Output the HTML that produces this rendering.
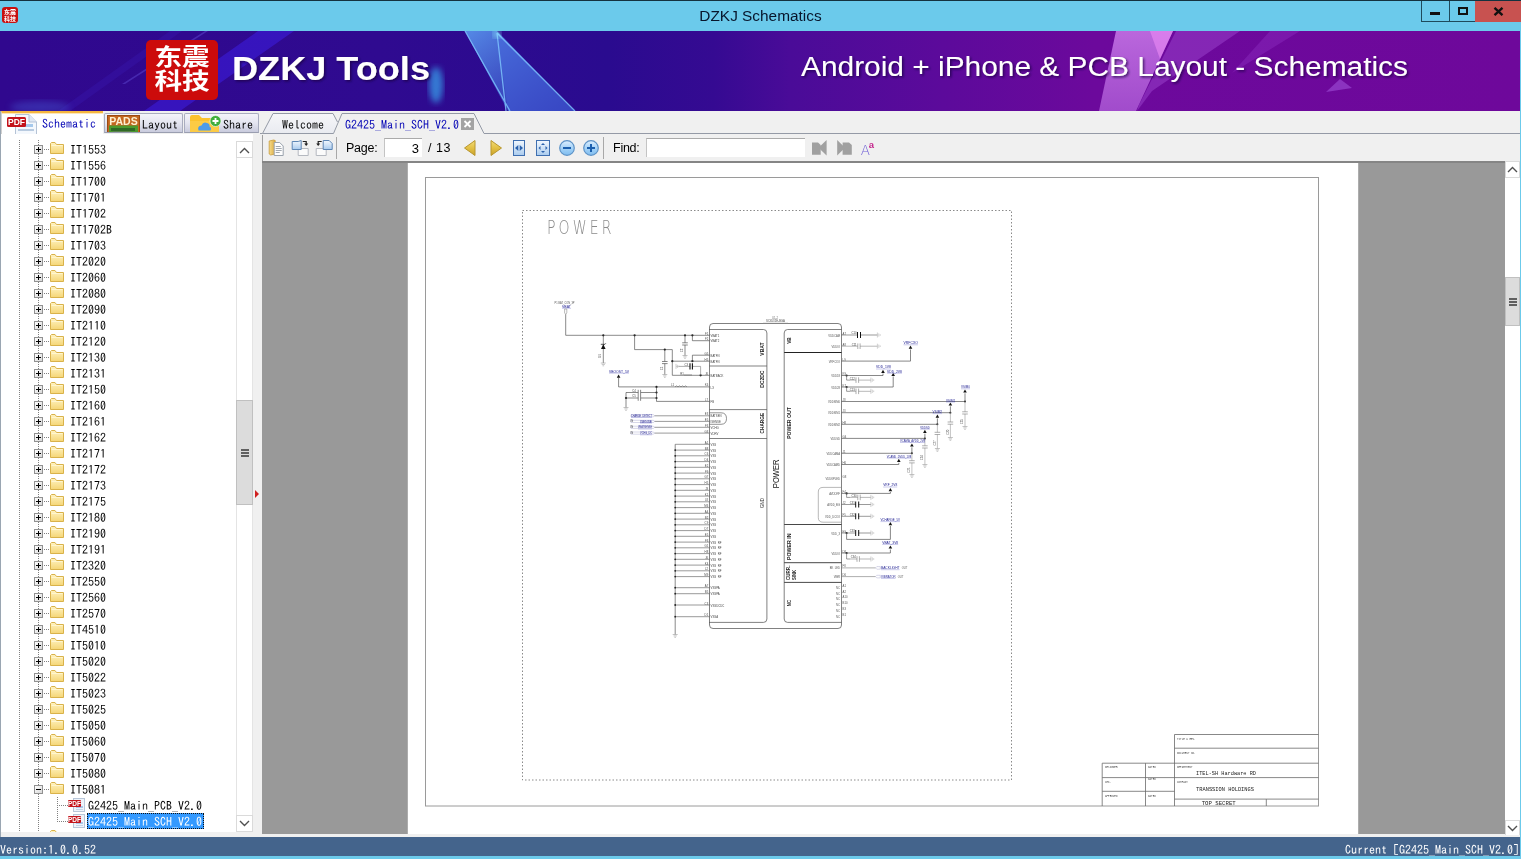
<!DOCTYPE html>
<html><head><meta charset="utf-8"><title>DZKJ Schematics</title>
<style>
html,body{margin:0;padding:0;}
body{width:1521px;height:859px;overflow:hidden;background:#6bcaeb;font-family:"Liberation Sans",sans-serif;}
#win{position:absolute;left:0;top:0;width:1521px;height:859px;background:#6bcaeb;overflow:hidden;will-change:transform;}
#mid{position:absolute;left:0;top:111px;width:1520px;height:726px;background:#f0f0f0;}
#win:before{content:"";position:absolute;left:0;top:0;width:1521px;height:1px;background:#14323f;z-index:9;}
.mono{font-family:"Liberation Mono","Noto Sans CJK SC",monospace;}
#titlebar{position:absolute;left:0;top:0;width:1521px;height:31px;}
#title{position:absolute;left:0;width:1521px;top:6.5px;text-align:center;font-size:15.4px;color:#08162c;line-height:18px;}
#appicon{position:absolute;left:2px;top:7px;width:16px;height:16px;background:#c8100f;border-radius:3px;overflow:hidden;font-family:"Liberation Sans","Noto Sans CJK SC",sans-serif;color:#fff;font-size:6px;line-height:6px;font-weight:bold;text-align:center;}
#appicon span{display:block;letter-spacing:0;margin-top:1.5px;}
#wbtns{position:absolute;left:1421px;top:1px;height:21px;width:100px;}
.wb{position:absolute;top:0;height:21px;box-sizing:border-box;border:1px solid #1e4a5c;border-top:none;}
.wb.min{left:0;width:29px;}
.wb.min i{position:absolute;left:8px;top:11px;width:10px;height:3px;background:#111;}
.wb.max{left:28px;width:27px;border-right:none}
.wb.max i{position:absolute;left:8px;top:6px;width:6px;height:4px;border:2px solid #111;border-top-width:2.5px;}
.wb.cls{left:54px;width:46px;background:#c85250;border:none;}
.wb.cls svg{position:absolute;left:18px;top:6px;}
#banner{position:absolute;left:0;top:31px;width:1520px;height:80px;overflow:hidden;background:#2f088d;}
#logo{position:absolute;left:146px;top:9px;width:72px;height:60px;background:#cc0b0b;border-radius:5px;font-family:"Liberation Sans","Noto Sans CJK SC",sans-serif;font-weight:bold;color:#fff;font-size:23px;overflow:hidden;}
#logo span{position:absolute;left:0;width:60px;text-align:center;line-height:24px;white-space:nowrap;transform:scaleX(1.2);transform-origin:0 0;letter-spacing:0;}
#logo span:first-child{top:5px;}
#logo span:last-child{top:29px;}
#tabrow{position:absolute;left:0;top:111px;width:1520px;height:24px;background:#f0f0f0;}
#left{position:absolute;left:0;top:134px;width:253px;height:698px;background:#fff;overflow:hidden;}
#tree{position:absolute;left:0;top:-134px;width:236px;height:966px;max-height:966px;clip-path:inset(135px 0 0 0);overflow:hidden;}
#lsb{position:absolute;left:236px;top:7px;width:17px;height:691px;background:#fff;box-sizing:border-box;border-left:1px solid #e4e4e4;border-right:1px solid #e4e4e4;}
#lsb .sbtn,#lsb .thumb{left:-1px;width:17px;}
#lsb .sbtn.up svg{margin-top:-2.5px;}
#edge{position:absolute;left:0;top:111px;width:1px;height:726px;background:#9aa6b2;}
#split{position:absolute;left:253px;top:135px;width:9px;height:699px;background:#f0f0f0;}
#toolbar{position:absolute;left:262px;top:135px;width:1258px;height:26px;background:#f0f0f0;}
#doc{position:absolute;left:262px;top:161px;width:1243px;height:673px;background:#999;}
#page{position:absolute;left:146px;top:2px;width:949px;height:671px;background:#fff;}
#status{position:absolute;left:0;top:836.5px;width:1520px;height:19px;background:#44648c;color:#fff;}
.vline{position:absolute;width:1px;background-image:linear-gradient(#808080 50%,transparent 50%);background-size:1px 2px;}
.hline{position:absolute;height:1px;background-image:linear-gradient(90deg,#808080 50%,transparent 50%);background-size:2px 1px;}
.row{position:absolute;left:0;width:236px;height:16px;font-family:"IPAGothic","Liberation Mono",monospace;font-size:12px;line-height:16px;color:#000;white-space:nowrap;}
.row .box{position:absolute;left:34px;top:4px;width:7px;height:7px;border:1px solid #919191;background:linear-gradient(135deg,#fff,#d8d8d8);}
.row .box:before{content:"";position:absolute;left:1px;top:3px;width:5px;height:1px;background:#000;}
.row .box.plus:after{content:"";position:absolute;left:3px;top:1px;width:1px;height:5px;background:#000;}
.row .box + .fld{left:49px;}
.row.nc:after{display:none}
.row:after{content:"";position:absolute;left:44px;top:8px;width:5px;height:1px;background-image:linear-gradient(90deg,#808080 50%,transparent 50%);background-size:2px 1px;}
.row .fld{position:absolute;left:49px;top:0px;}
.row .lbl{position:absolute;left:69px;top:-0.5px;padding:0 1px;}
.row .lbl.c{left:87px;}
.row .lbl.sel{background:#3399ff;color:#fff;outline:1px dotted #111;outline-offset:-1px;height:16px;padding-right:2px;}
.row .pdfw{position:absolute;left:68px;top:0px;}
.ltab{position:absolute;top:2px;height:20px;box-sizing:border-box;border:1px solid #a9adbf;border-bottom:1px solid #9a9eb0;border-radius:2px 2px 0 0;background:linear-gradient(#f4f4fa,#e4e5f0 50%,#c9cbdd);overflow:hidden;}
.ltab.act{top:0;height:24px;background:#fff;border:none;border-top:2px solid #f5b640;box-shadow:inset 0 1px 0 #fde6b8;border-radius:0;border-left:1px solid #d0d0d0;}
.ltab .ti{position:absolute;}
.tt{position:absolute;top:1.5px;font-family:"IPAGothic","Liberation Mono",monospace;font-size:12px;line-height:16px;white-space:nowrap;color:#000;}

#toolbar{border-left:1px solid #a0a0a0;box-sizing:border-box;}
#toolbar .tl{position:absolute;top:5px;letter-spacing:-0.25px;font-size:12.5px;line-height:16px;color:#000;white-space:nowrap;}
#toolbar .inp{position:absolute;top:3px;height:19px;background:#fff;border-top:1px solid #aaa;border-left:1px solid #c4c4c4;box-sizing:border-box;font-size:13px;line-height:18px;}
#toolbar .inp span{position:absolute;right:3px;top:1px;}
#doc{border-top:2px solid #858585;box-sizing:border-box;top:161px;height:673px;overflow:hidden;}
#sch{top:-2px !important;}
#rsb{position:absolute;left:1505px;top:161px;width:15px;height:674px;background:#fff;overflow:hidden;}
#rsb .sbtn.dn{bottom:-2px;}
.sbtn{position:absolute;left:0;width:100%;height:17px;box-sizing:border-box;background:#fff;border:1px solid #dadada;}
.sbtn svg{position:absolute;left:50%;top:50%;margin:-3.5px 0 0 -5.5px;}
.sbtn.up{top:0;} .sbtn.dn{bottom:0;}
.thumb{position:absolute;left:0;width:100%;background:#dcdcdc;border:1px solid #c0c0c0;box-sizing:border-box;}
.thumb b{position:absolute;left:50%;top:50%;width:8px;height:8px;margin:-4px 0 0 -4px;background:linear-gradient(#606060 0,#606060 2px,transparent 2px,transparent 3px,#606060 3px,#606060 5px,transparent 5px,transparent 6px,#606060 6px);}
#status{font-family:"IPAGothic","Liberation Mono",monospace;font-size:12px;line-height:19px;}
#status .l{position:absolute;left:0;top:3px;white-space:nowrap;}
#status .r{position:absolute;right:1px;top:3px;white-space:nowrap;}
#split i{position:absolute;left:2px;top:355px;width:0;height:0;border-left:4px solid #d02020;border-top:4px solid transparent;border-bottom:4px solid transparent;}

</style></head>
<body>
<svg width="0" height="0" style="position:absolute"><defs>
<linearGradient id="fg" x1="0" y1="0" x2="0" y2="1"><stop offset="0" stop-color="#fff3c2"/><stop offset="1" stop-color="#f5d676"/></linearGradient>
</defs></svg>
<div id="win">
<div id="titlebar"><div id="appicon"><span>东震</span><span>科技</span></div><div id="title">DZKJ Schematics</div>
<div id="wbtns"><div class="wb min"><i></i></div><div class="wb max"><i></i></div><div class="wb cls"><svg width="11" height="9" viewBox="0 0 11 9"><path d="M1.500 0.800 L9.500 8.200 M9.500 0.800 L1.500 8.200" stroke="#111" stroke-width="2.300"/></svg></div></div>
</div>
<div id="banner">
<svg width="1520" height="80" viewBox="0 0 1520 80" style="position:absolute;left:0;top:0">
<defs>
<linearGradient id="bg1" x1="0" y1="0" x2="1520" y2="0" gradientUnits="userSpaceOnUse">
<stop offset="0" stop-color="#30088e"/><stop offset="0.25" stop-color="#2f0a90"/><stop offset="0.4" stop-color="#2a0b8f"/><stop offset="0.47" stop-color="#350a92"/><stop offset="0.52" stop-color="#4a0b98"/><stop offset="0.62" stop-color="#5c0a9b"/><stop offset="0.72" stop-color="#6c099c"/><stop offset="1" stop-color="#6e089b"/>
</linearGradient>
<linearGradient id="tri" x1="0" y1="0" x2="1" y2="1"><stop offset="0" stop-color="#5a98f0" stop-opacity=".9"/><stop offset="1" stop-color="#2d3cc0" stop-opacity=".55"/></linearGradient>
<linearGradient id="pk" x1="0" y1="0" x2="0" y2="1"><stop offset="0" stop-color="#c878e8" stop-opacity=".85"/><stop offset="1" stop-color="#b868e0" stop-opacity=".7"/></linearGradient>
<filter id="ts" x="-5%" y="-20%" width="110%" height="150%"><feDropShadow dx="1.500" dy="1.500" stdDeviation="1" flood-color="#1a0040" flood-opacity=".75"/></filter>
<filter id="bl"><feGaussianBlur stdDeviation="3"/></filter>
</defs>
<rect width="1520" height="80" fill="url(#bg1)"/>
<!-- left streaks -->
<path d="M258 0 L294 0 L180 80 L144 80 Z" fill="#3c1cdc" opacity=".6"/>
<path d="M205 0 L208 0 L125 53 L122 53 Z" fill="#6a58e0" opacity=".4"/>
<path d="M170 0 L182 0 L70 80 L58 80 Z" fill="#3a20c0" opacity=".25"/>
<ellipse cx="436" cy="54" rx="7" ry="18" fill="#38a8f0" opacity=".7" filter="url(#bl)"/>
<ellipse cx="40" cy="76" rx="30" ry="6" fill="#4a6ae0" opacity=".35" filter="url(#bl)"/>
<!-- blue triangle -->
<path d="M465 0 L497 0 L575 80 L508 80 Z" fill="url(#tri)"/>
<path d="M497 2 L508 80 L575 80 Z" fill="#4466dc" opacity=".5"/>
<path d="M465 0 L510 80 M497 2 L506 80 M497 2 L575 80" stroke="#7fc8ff" stroke-width="1.300" opacity=".8" fill="none"/>
<circle cx="497" cy="3" r="4" fill="#9ff" opacity=".6" filter="url(#bl)"/>
<!-- pink shards -->
<path d="M1116 0 L1173 0 L1136 80 L1099 80 Z" fill="url(#pk)"/>
<path d="M1150 0 L1173 0 L1160 28 Z" fill="#f090f8" opacity=".55"/>
<path d="M1176 0 L1240 0 L1152 60 L1137 80 L1139 74 Z" fill="#a850d8" opacity=".42"/>
<path d="M1270 0 L1300 0 L1232 42 Z" fill="#9a40d0" opacity=".3"/>
<path d="M1326 61 L1340 48 L1352 57 Z" fill="#a050d8" opacity=".6"/>
<text x="232" y="48.500" font-family="Liberation Sans, sans-serif" font-weight="bold" font-size="32.500" fill="#fff" textLength="198" lengthAdjust="spacingAndGlyphs" filter="url(#ts)">DZKJ Tools</text>
<text x="801" y="44.500" font-family="Liberation Sans, sans-serif" font-size="26.800" fill="#fff" textLength="607" lengthAdjust="spacingAndGlyphs" filter="url(#ts)">Android + iPhone &amp; PCB Layout - Schematics</text>
</svg>
<div id="logo"><span>东震</span><span>科技</span></div>
</div>

<div id="mid"></div>
<div id="tabrow">
<div class="ltab act" style="left:1px;width:102px"><svg class="ti" width="36" height="22" viewBox="0 0 36 22" style="left:2px;top:0px"><path d="M11.5 1.500 L25 1.500 L32.500 9 L32.500 22 L11.500 22 Z" fill="#f4f8fd" stroke="#b5c3d6"/><path d="M25 1.500 L25 9 L32.500 9" fill="#dfe8f3" stroke="#b5c3d6"/><rect x="15" y="11" width="14" height="3" fill="#a6c9ec"/><rect x="14" y="16" width="16" height="2" fill="#b9cbe0"/><rect x="3" y="4" width="19" height="10" rx="1.500" fill="#c3131b"/><text x="12.500" y="12" font-family="Liberation Sans" font-weight="bold" font-size="8.500" fill="#fff" text-anchor="middle">PDF</text></svg><span class="tt" style="left:40px;top:2px;color:#0000b4">Schematic</span></div>
<div class="ltab" style="left:104px;width:79px"><svg class="ti" width="34" height="19" viewBox="0 0 34 19" style="left:2px;top:1px"><rect x="0.500" y="0.500" width="32" height="19" fill="#c4661f" stroke="#9a4a12"/><rect x="2" y="10.500" width="29" height="9" fill="#4c9a2e"/><rect x="4" y="13" width="24" height="3" fill="#2f6a25"/><rect x="6" y="16.500" width="18" height="2" fill="#6b6b6b"/><text x="16.500" y="9.500" font-family="Liberation Sans" font-weight="bold" font-size="10.500" fill="#fdf0d0" text-anchor="middle">PADS</text></svg><span class="tt" style="left:37px">Layout</span></div>
<div class="ltab" style="left:184px;width:75px"><svg class="ti" width="34" height="20" viewBox="0 0 34 20" style="left:4px;top:-1px"><path d="M1 4 Q1 2 3 2 L10 2 L13 5 L28 5 Q30 5 30 7 L30 20 L1 20 Z" fill="#fbc22f"/><path d="M1 8 L30 8 L30 20 L1 20 Z" fill="#fccb45"/><path d="M9.500 17.500 Q8 13 12.500 12.500 Q14 8.500 18 10 Q21 10.500 20.500 13.500 Q23 14.500 21.500 17.500 Z" fill="#4c9be8"/><circle cx="26.500" cy="8" r="5.500" fill="#3fae3c" stroke="#fff" stroke-width="0.600"/><path d="M23.500 8 L29.500 8 M26.500 5 L26.500 11" stroke="#fff" stroke-width="1.800"/></svg><span class="tt" style="left:38px">Share</span></div>
<svg id="dtabs" width="1260" height="24" viewBox="0 0 1260 24" style="position:absolute;left:260px;top:0">
<defs><linearGradient id="wtg" x1="0" y1="0" x2="0" y2="1"><stop offset="0" stop-color="#f6f6f9"/><stop offset="1" stop-color="#e9ebf0"/></linearGradient></defs><path d="M2.500 22.500 L13 2.500 L73 2.500 L77.500 11 L73.500 22.500 Z" fill="url(#wtg)" stroke="none"/><path d="M0 22.500 L2.500 22.500 L13 2.500 L73 2.500 L77.500 11" fill="none" stroke="#949aa6" stroke-width="1"/>
<path d="M2.500 22.500 L73.500 22.500" stroke="#949aa6" stroke-width="1"/>
<path d="M73.500 22.500 L82 2.500 L214 2.500 L224 22.500 L1260 22.500" fill="none" stroke="#949aa6" stroke-width="1"/>
<rect x="201" y="7" width="13" height="12" fill="#a3a3a3"/>
<path d="M204.500 10 L210.500 16 M210.500 10 L204.500 16" stroke="#fff" stroke-width="1.800"/>
</svg>
<span class="tt" style="left:282px;top:4.5px">Welcome</span>
<span class="tt" style="left:345px;top:4.5px;color:#0000b4">G2425_Main_SCH_V2.0</span>
</div>

<div id="left">
<div id="tree">
<div class="vline" style="left:19px;top:140px;height:692px"></div>
<div class="vline" style="left:38px;top:140px;height:692px"></div>
<div class="vline" style="left:57px;top:797px;height:25px"></div>
<div class="hline" style="left:57px;top:805px;width:11px"></div>
<div class="hline" style="left:57px;top:821px;width:11px"></div>
<div class="row" style="top:141px"><span class="box plus"></span><svg class="fld" width="16" height="14" viewBox="0 0 16 14"><path d="M1.5 2.5 L1.5 12.5 L14.5 12.5 L14.5 3.5 L7.5 3.5 L6 1.5 L2.5 1.5 Z" fill="url(#fg)" stroke="#d9b24a" stroke-width="1"/><path d="M2.5 4.5 L13.5 4.5" stroke="#fff6cf" stroke-width="1"/></svg><span class="lbl">IT1553</span></div><div class="row" style="top:157px"><span class="box plus"></span><svg class="fld" width="16" height="14" viewBox="0 0 16 14"><path d="M1.5 2.5 L1.5 12.5 L14.5 12.5 L14.5 3.5 L7.5 3.5 L6 1.5 L2.5 1.5 Z" fill="url(#fg)" stroke="#d9b24a" stroke-width="1"/><path d="M2.5 4.5 L13.5 4.5" stroke="#fff6cf" stroke-width="1"/></svg><span class="lbl">IT1556</span></div><div class="row" style="top:173px"><span class="box plus"></span><svg class="fld" width="16" height="14" viewBox="0 0 16 14"><path d="M1.5 2.5 L1.5 12.5 L14.5 12.5 L14.5 3.5 L7.5 3.5 L6 1.5 L2.5 1.5 Z" fill="url(#fg)" stroke="#d9b24a" stroke-width="1"/><path d="M2.5 4.5 L13.5 4.5" stroke="#fff6cf" stroke-width="1"/></svg><span class="lbl">IT1700</span></div><div class="row" style="top:189px"><span class="box plus"></span><svg class="fld" width="16" height="14" viewBox="0 0 16 14"><path d="M1.5 2.5 L1.5 12.5 L14.5 12.5 L14.5 3.5 L7.5 3.5 L6 1.5 L2.5 1.5 Z" fill="url(#fg)" stroke="#d9b24a" stroke-width="1"/><path d="M2.5 4.5 L13.5 4.5" stroke="#fff6cf" stroke-width="1"/></svg><span class="lbl">IT1701</span></div><div class="row" style="top:205px"><span class="box plus"></span><svg class="fld" width="16" height="14" viewBox="0 0 16 14"><path d="M1.5 2.5 L1.5 12.5 L14.5 12.5 L14.5 3.5 L7.5 3.5 L6 1.5 L2.5 1.5 Z" fill="url(#fg)" stroke="#d9b24a" stroke-width="1"/><path d="M2.5 4.5 L13.5 4.5" stroke="#fff6cf" stroke-width="1"/></svg><span class="lbl">IT1702</span></div><div class="row" style="top:221px"><span class="box plus"></span><svg class="fld" width="16" height="14" viewBox="0 0 16 14"><path d="M1.5 2.5 L1.5 12.5 L14.5 12.5 L14.5 3.5 L7.5 3.5 L6 1.5 L2.5 1.5 Z" fill="url(#fg)" stroke="#d9b24a" stroke-width="1"/><path d="M2.5 4.5 L13.5 4.5" stroke="#fff6cf" stroke-width="1"/></svg><span class="lbl">IT1702B</span></div><div class="row" style="top:237px"><span class="box plus"></span><svg class="fld" width="16" height="14" viewBox="0 0 16 14"><path d="M1.5 2.5 L1.5 12.5 L14.5 12.5 L14.5 3.5 L7.5 3.5 L6 1.5 L2.5 1.5 Z" fill="url(#fg)" stroke="#d9b24a" stroke-width="1"/><path d="M2.5 4.5 L13.5 4.5" stroke="#fff6cf" stroke-width="1"/></svg><span class="lbl">IT1703</span></div><div class="row" style="top:253px"><span class="box plus"></span><svg class="fld" width="16" height="14" viewBox="0 0 16 14"><path d="M1.5 2.5 L1.5 12.5 L14.5 12.5 L14.5 3.5 L7.5 3.5 L6 1.5 L2.5 1.5 Z" fill="url(#fg)" stroke="#d9b24a" stroke-width="1"/><path d="M2.5 4.5 L13.5 4.5" stroke="#fff6cf" stroke-width="1"/></svg><span class="lbl">IT2020</span></div><div class="row" style="top:269px"><span class="box plus"></span><svg class="fld" width="16" height="14" viewBox="0 0 16 14"><path d="M1.5 2.5 L1.5 12.5 L14.5 12.5 L14.5 3.5 L7.5 3.5 L6 1.5 L2.5 1.5 Z" fill="url(#fg)" stroke="#d9b24a" stroke-width="1"/><path d="M2.5 4.5 L13.5 4.5" stroke="#fff6cf" stroke-width="1"/></svg><span class="lbl">IT2060</span></div><div class="row" style="top:285px"><span class="box plus"></span><svg class="fld" width="16" height="14" viewBox="0 0 16 14"><path d="M1.5 2.5 L1.5 12.5 L14.5 12.5 L14.5 3.5 L7.5 3.5 L6 1.5 L2.5 1.5 Z" fill="url(#fg)" stroke="#d9b24a" stroke-width="1"/><path d="M2.5 4.5 L13.5 4.5" stroke="#fff6cf" stroke-width="1"/></svg><span class="lbl">IT2080</span></div><div class="row" style="top:301px"><span class="box plus"></span><svg class="fld" width="16" height="14" viewBox="0 0 16 14"><path d="M1.5 2.5 L1.5 12.5 L14.5 12.5 L14.5 3.5 L7.5 3.5 L6 1.5 L2.5 1.5 Z" fill="url(#fg)" stroke="#d9b24a" stroke-width="1"/><path d="M2.5 4.5 L13.5 4.5" stroke="#fff6cf" stroke-width="1"/></svg><span class="lbl">IT2090</span></div><div class="row" style="top:317px"><span class="box plus"></span><svg class="fld" width="16" height="14" viewBox="0 0 16 14"><path d="M1.5 2.5 L1.5 12.5 L14.5 12.5 L14.5 3.5 L7.5 3.5 L6 1.5 L2.5 1.5 Z" fill="url(#fg)" stroke="#d9b24a" stroke-width="1"/><path d="M2.5 4.5 L13.5 4.5" stroke="#fff6cf" stroke-width="1"/></svg><span class="lbl">IT2110</span></div><div class="row" style="top:333px"><span class="box plus"></span><svg class="fld" width="16" height="14" viewBox="0 0 16 14"><path d="M1.5 2.5 L1.5 12.5 L14.5 12.5 L14.5 3.5 L7.5 3.5 L6 1.5 L2.5 1.5 Z" fill="url(#fg)" stroke="#d9b24a" stroke-width="1"/><path d="M2.5 4.5 L13.5 4.5" stroke="#fff6cf" stroke-width="1"/></svg><span class="lbl">IT2120</span></div><div class="row" style="top:349px"><span class="box plus"></span><svg class="fld" width="16" height="14" viewBox="0 0 16 14"><path d="M1.5 2.5 L1.5 12.5 L14.5 12.5 L14.5 3.5 L7.5 3.5 L6 1.5 L2.5 1.5 Z" fill="url(#fg)" stroke="#d9b24a" stroke-width="1"/><path d="M2.5 4.5 L13.5 4.5" stroke="#fff6cf" stroke-width="1"/></svg><span class="lbl">IT2130</span></div><div class="row" style="top:365px"><span class="box plus"></span><svg class="fld" width="16" height="14" viewBox="0 0 16 14"><path d="M1.5 2.5 L1.5 12.5 L14.5 12.5 L14.5 3.5 L7.5 3.5 L6 1.5 L2.5 1.5 Z" fill="url(#fg)" stroke="#d9b24a" stroke-width="1"/><path d="M2.5 4.5 L13.5 4.5" stroke="#fff6cf" stroke-width="1"/></svg><span class="lbl">IT2131</span></div><div class="row" style="top:381px"><span class="box plus"></span><svg class="fld" width="16" height="14" viewBox="0 0 16 14"><path d="M1.5 2.5 L1.5 12.5 L14.5 12.5 L14.5 3.5 L7.5 3.5 L6 1.5 L2.5 1.5 Z" fill="url(#fg)" stroke="#d9b24a" stroke-width="1"/><path d="M2.5 4.5 L13.5 4.5" stroke="#fff6cf" stroke-width="1"/></svg><span class="lbl">IT2150</span></div><div class="row" style="top:397px"><span class="box plus"></span><svg class="fld" width="16" height="14" viewBox="0 0 16 14"><path d="M1.5 2.5 L1.5 12.5 L14.5 12.5 L14.5 3.5 L7.5 3.5 L6 1.5 L2.5 1.5 Z" fill="url(#fg)" stroke="#d9b24a" stroke-width="1"/><path d="M2.5 4.5 L13.5 4.5" stroke="#fff6cf" stroke-width="1"/></svg><span class="lbl">IT2160</span></div><div class="row" style="top:413px"><span class="box plus"></span><svg class="fld" width="16" height="14" viewBox="0 0 16 14"><path d="M1.5 2.5 L1.5 12.5 L14.5 12.5 L14.5 3.5 L7.5 3.5 L6 1.5 L2.5 1.5 Z" fill="url(#fg)" stroke="#d9b24a" stroke-width="1"/><path d="M2.5 4.5 L13.5 4.5" stroke="#fff6cf" stroke-width="1"/></svg><span class="lbl">IT2161</span></div><div class="row" style="top:429px"><span class="box plus"></span><svg class="fld" width="16" height="14" viewBox="0 0 16 14"><path d="M1.5 2.5 L1.5 12.5 L14.5 12.5 L14.5 3.5 L7.5 3.5 L6 1.5 L2.5 1.5 Z" fill="url(#fg)" stroke="#d9b24a" stroke-width="1"/><path d="M2.5 4.5 L13.5 4.5" stroke="#fff6cf" stroke-width="1"/></svg><span class="lbl">IT2162</span></div><div class="row" style="top:445px"><span class="box plus"></span><svg class="fld" width="16" height="14" viewBox="0 0 16 14"><path d="M1.5 2.5 L1.5 12.5 L14.5 12.5 L14.5 3.5 L7.5 3.5 L6 1.5 L2.5 1.5 Z" fill="url(#fg)" stroke="#d9b24a" stroke-width="1"/><path d="M2.5 4.5 L13.5 4.5" stroke="#fff6cf" stroke-width="1"/></svg><span class="lbl">IT2171</span></div><div class="row" style="top:461px"><span class="box plus"></span><svg class="fld" width="16" height="14" viewBox="0 0 16 14"><path d="M1.5 2.5 L1.5 12.5 L14.5 12.5 L14.5 3.5 L7.5 3.5 L6 1.5 L2.5 1.5 Z" fill="url(#fg)" stroke="#d9b24a" stroke-width="1"/><path d="M2.5 4.5 L13.5 4.5" stroke="#fff6cf" stroke-width="1"/></svg><span class="lbl">IT2172</span></div><div class="row" style="top:477px"><span class="box plus"></span><svg class="fld" width="16" height="14" viewBox="0 0 16 14"><path d="M1.5 2.5 L1.5 12.5 L14.5 12.5 L14.5 3.5 L7.5 3.5 L6 1.5 L2.5 1.5 Z" fill="url(#fg)" stroke="#d9b24a" stroke-width="1"/><path d="M2.5 4.5 L13.5 4.5" stroke="#fff6cf" stroke-width="1"/></svg><span class="lbl">IT2173</span></div><div class="row" style="top:493px"><span class="box plus"></span><svg class="fld" width="16" height="14" viewBox="0 0 16 14"><path d="M1.5 2.5 L1.5 12.5 L14.5 12.5 L14.5 3.5 L7.5 3.5 L6 1.5 L2.5 1.5 Z" fill="url(#fg)" stroke="#d9b24a" stroke-width="1"/><path d="M2.5 4.5 L13.5 4.5" stroke="#fff6cf" stroke-width="1"/></svg><span class="lbl">IT2175</span></div><div class="row" style="top:509px"><span class="box plus"></span><svg class="fld" width="16" height="14" viewBox="0 0 16 14"><path d="M1.5 2.5 L1.5 12.5 L14.5 12.5 L14.5 3.5 L7.5 3.5 L6 1.5 L2.5 1.5 Z" fill="url(#fg)" stroke="#d9b24a" stroke-width="1"/><path d="M2.5 4.5 L13.5 4.5" stroke="#fff6cf" stroke-width="1"/></svg><span class="lbl">IT2180</span></div><div class="row" style="top:525px"><span class="box plus"></span><svg class="fld" width="16" height="14" viewBox="0 0 16 14"><path d="M1.5 2.5 L1.5 12.5 L14.5 12.5 L14.5 3.5 L7.5 3.5 L6 1.5 L2.5 1.5 Z" fill="url(#fg)" stroke="#d9b24a" stroke-width="1"/><path d="M2.5 4.5 L13.5 4.5" stroke="#fff6cf" stroke-width="1"/></svg><span class="lbl">IT2190</span></div><div class="row" style="top:541px"><span class="box plus"></span><svg class="fld" width="16" height="14" viewBox="0 0 16 14"><path d="M1.5 2.5 L1.5 12.5 L14.5 12.5 L14.5 3.5 L7.5 3.5 L6 1.5 L2.5 1.5 Z" fill="url(#fg)" stroke="#d9b24a" stroke-width="1"/><path d="M2.5 4.5 L13.5 4.5" stroke="#fff6cf" stroke-width="1"/></svg><span class="lbl">IT2191</span></div><div class="row" style="top:557px"><span class="box plus"></span><svg class="fld" width="16" height="14" viewBox="0 0 16 14"><path d="M1.5 2.5 L1.5 12.5 L14.5 12.5 L14.5 3.5 L7.5 3.5 L6 1.5 L2.5 1.5 Z" fill="url(#fg)" stroke="#d9b24a" stroke-width="1"/><path d="M2.5 4.5 L13.5 4.5" stroke="#fff6cf" stroke-width="1"/></svg><span class="lbl">IT2320</span></div><div class="row" style="top:573px"><span class="box plus"></span><svg class="fld" width="16" height="14" viewBox="0 0 16 14"><path d="M1.5 2.5 L1.5 12.5 L14.5 12.5 L14.5 3.5 L7.5 3.5 L6 1.5 L2.5 1.5 Z" fill="url(#fg)" stroke="#d9b24a" stroke-width="1"/><path d="M2.5 4.5 L13.5 4.5" stroke="#fff6cf" stroke-width="1"/></svg><span class="lbl">IT2550</span></div><div class="row" style="top:589px"><span class="box plus"></span><svg class="fld" width="16" height="14" viewBox="0 0 16 14"><path d="M1.5 2.5 L1.5 12.5 L14.5 12.5 L14.5 3.5 L7.5 3.5 L6 1.5 L2.5 1.5 Z" fill="url(#fg)" stroke="#d9b24a" stroke-width="1"/><path d="M2.5 4.5 L13.5 4.5" stroke="#fff6cf" stroke-width="1"/></svg><span class="lbl">IT2560</span></div><div class="row" style="top:605px"><span class="box plus"></span><svg class="fld" width="16" height="14" viewBox="0 0 16 14"><path d="M1.5 2.5 L1.5 12.5 L14.5 12.5 L14.5 3.5 L7.5 3.5 L6 1.5 L2.5 1.5 Z" fill="url(#fg)" stroke="#d9b24a" stroke-width="1"/><path d="M2.5 4.5 L13.5 4.5" stroke="#fff6cf" stroke-width="1"/></svg><span class="lbl">IT2570</span></div><div class="row" style="top:621px"><span class="box plus"></span><svg class="fld" width="16" height="14" viewBox="0 0 16 14"><path d="M1.5 2.5 L1.5 12.5 L14.5 12.5 L14.5 3.5 L7.5 3.5 L6 1.5 L2.5 1.5 Z" fill="url(#fg)" stroke="#d9b24a" stroke-width="1"/><path d="M2.5 4.5 L13.5 4.5" stroke="#fff6cf" stroke-width="1"/></svg><span class="lbl">IT4510</span></div><div class="row" style="top:637px"><span class="box plus"></span><svg class="fld" width="16" height="14" viewBox="0 0 16 14"><path d="M1.5 2.5 L1.5 12.5 L14.5 12.5 L14.5 3.5 L7.5 3.5 L6 1.5 L2.5 1.5 Z" fill="url(#fg)" stroke="#d9b24a" stroke-width="1"/><path d="M2.5 4.5 L13.5 4.5" stroke="#fff6cf" stroke-width="1"/></svg><span class="lbl">IT5010</span></div><div class="row" style="top:653px"><span class="box plus"></span><svg class="fld" width="16" height="14" viewBox="0 0 16 14"><path d="M1.5 2.5 L1.5 12.5 L14.5 12.5 L14.5 3.5 L7.5 3.5 L6 1.5 L2.5 1.5 Z" fill="url(#fg)" stroke="#d9b24a" stroke-width="1"/><path d="M2.5 4.5 L13.5 4.5" stroke="#fff6cf" stroke-width="1"/></svg><span class="lbl">IT5020</span></div><div class="row" style="top:669px"><span class="box plus"></span><svg class="fld" width="16" height="14" viewBox="0 0 16 14"><path d="M1.5 2.5 L1.5 12.5 L14.5 12.5 L14.5 3.5 L7.5 3.5 L6 1.5 L2.5 1.5 Z" fill="url(#fg)" stroke="#d9b24a" stroke-width="1"/><path d="M2.5 4.5 L13.5 4.5" stroke="#fff6cf" stroke-width="1"/></svg><span class="lbl">IT5022</span></div><div class="row" style="top:685px"><span class="box plus"></span><svg class="fld" width="16" height="14" viewBox="0 0 16 14"><path d="M1.5 2.5 L1.5 12.5 L14.5 12.5 L14.5 3.5 L7.5 3.5 L6 1.5 L2.5 1.5 Z" fill="url(#fg)" stroke="#d9b24a" stroke-width="1"/><path d="M2.5 4.5 L13.5 4.5" stroke="#fff6cf" stroke-width="1"/></svg><span class="lbl">IT5023</span></div><div class="row" style="top:701px"><span class="box plus"></span><svg class="fld" width="16" height="14" viewBox="0 0 16 14"><path d="M1.5 2.5 L1.5 12.5 L14.5 12.5 L14.5 3.5 L7.5 3.5 L6 1.5 L2.5 1.5 Z" fill="url(#fg)" stroke="#d9b24a" stroke-width="1"/><path d="M2.5 4.5 L13.5 4.5" stroke="#fff6cf" stroke-width="1"/></svg><span class="lbl">IT5025</span></div><div class="row" style="top:717px"><span class="box plus"></span><svg class="fld" width="16" height="14" viewBox="0 0 16 14"><path d="M1.5 2.5 L1.5 12.5 L14.5 12.5 L14.5 3.5 L7.5 3.5 L6 1.5 L2.5 1.5 Z" fill="url(#fg)" stroke="#d9b24a" stroke-width="1"/><path d="M2.5 4.5 L13.5 4.5" stroke="#fff6cf" stroke-width="1"/></svg><span class="lbl">IT5050</span></div><div class="row" style="top:733px"><span class="box plus"></span><svg class="fld" width="16" height="14" viewBox="0 0 16 14"><path d="M1.5 2.5 L1.5 12.5 L14.5 12.5 L14.5 3.5 L7.5 3.5 L6 1.5 L2.5 1.5 Z" fill="url(#fg)" stroke="#d9b24a" stroke-width="1"/><path d="M2.5 4.5 L13.5 4.5" stroke="#fff6cf" stroke-width="1"/></svg><span class="lbl">IT5060</span></div><div class="row" style="top:749px"><span class="box plus"></span><svg class="fld" width="16" height="14" viewBox="0 0 16 14"><path d="M1.5 2.5 L1.5 12.5 L14.5 12.5 L14.5 3.5 L7.5 3.5 L6 1.5 L2.5 1.5 Z" fill="url(#fg)" stroke="#d9b24a" stroke-width="1"/><path d="M2.5 4.5 L13.5 4.5" stroke="#fff6cf" stroke-width="1"/></svg><span class="lbl">IT5070</span></div><div class="row" style="top:765px"><span class="box plus"></span><svg class="fld" width="16" height="14" viewBox="0 0 16 14"><path d="M1.5 2.5 L1.5 12.5 L14.5 12.5 L14.5 3.5 L7.5 3.5 L6 1.5 L2.5 1.5 Z" fill="url(#fg)" stroke="#d9b24a" stroke-width="1"/><path d="M2.5 4.5 L13.5 4.5" stroke="#fff6cf" stroke-width="1"/></svg><span class="lbl">IT5080</span></div><div class="row" style="top:781px"><span class="box minus"></span><svg class="fld" width="16" height="14" viewBox="0 0 16 14"><path d="M1.5 2.5 L1.5 12.5 L14.5 12.5 L14.5 3.5 L7.5 3.5 L6 1.5 L2.5 1.5 Z" fill="url(#fg)" stroke="#d9b24a" stroke-width="1"/><path d="M2.5 4.5 L13.5 4.5" stroke="#fff6cf" stroke-width="1"/></svg><span class="lbl">IT5081</span></div><div class="row nc" style="top:797px"><span class="pdfw"><svg class="pdfi" width="18" height="16" viewBox="0 0 18 16"><rect x="5.5" y="1.5" width="11" height="13" fill="#eef4fb" stroke="#b8c6d8"/><rect x="8" y="9" width="7" height="2" fill="#a9c8ea"/><rect x="8" y="12" width="7" height="1" fill="#c3d5ea"/><rect x="0" y="3" width="13" height="7" rx="1" fill="#c4151c"/><text x="6.5" y="9" font-family="Liberation Sans" font-weight="bold" font-size="6.5" fill="#fff" text-anchor="middle">PDF</text></svg></span><span class="lbl c">G2425_Main_PCB_V2.0</span></div><div class="row nc" style="top:813px"><span class="pdfw"><svg class="pdfi" width="18" height="16" viewBox="0 0 18 16"><rect x="5.5" y="1.5" width="11" height="13" fill="#eef4fb" stroke="#b8c6d8"/><rect x="8" y="9" width="7" height="2" fill="#a9c8ea"/><rect x="8" y="12" width="7" height="1" fill="#c3d5ea"/><rect x="0" y="3" width="13" height="7" rx="1" fill="#c4151c"/><text x="6.5" y="9" font-family="Liberation Sans" font-weight="bold" font-size="6.5" fill="#fff" text-anchor="middle">PDF</text></svg></span><span class="lbl c sel">G2425_Main_SCH_V2.0</span></div><div class="row nc" style="top:829px"><svg class="fld" width="16" height="14" viewBox="0 0 16 14"><path d="M1.5 2.5 L1.5 12.5 L14.5 12.5 L14.5 3.5 L7.5 3.5 L6 1.5 L2.5 1.5 Z" fill="url(#fg)" stroke="#d9b24a" stroke-width="1"/><path d="M2.5 4.5 L13.5 4.5" stroke="#fff6cf" stroke-width="1"/></svg></div>
</div>
<div id="lsb"><div class="sbtn up"><svg width="11" height="7" viewBox="0 0 11 7"><path d="M1 6 L5.5 1.5 L10 6" fill="none" stroke="#505050" stroke-width="1.4"/></svg></div><div class="thumb" style="top:259px;height:105px"><b></b></div><div class="sbtn dn"><svg width="11" height="7" viewBox="0 0 11 7"><path d="M1 1 L5.5 5.5 L10 1" fill="none" stroke="#505050" stroke-width="1.4"/></svg></div></div>
</div>
<div id="split"><i></i></div><div id="edge"></div>
<div id="toolbar"><div style="position:absolute;left:-1px;top:0;width:1258px;height:26px">
<svg width="350" height="26" viewBox="0 0 350 26" style="position:absolute;left:0;top:0">
<defs>
<linearGradient id="gold" x1="0" y1="0" x2="0" y2="1"><stop offset="0" stop-color="#f2dc7a"/><stop offset="0.5" stop-color="#e3c044"/><stop offset="1" stop-color="#c9a22a"/></linearGradient>
<linearGradient id="blu" x1="0" y1="0" x2="0" y2="1"><stop offset="0" stop-color="#f2f8fe"/><stop offset="0.5" stop-color="#cfe2f6"/><stop offset="1" stop-color="#a9cbee"/></linearGradient>
<linearGradient id="blc" x1="0" y1="0" x2="0" y2="1"><stop offset="0" stop-color="#dbeeff"/><stop offset="0.5" stop-color="#a6d3f7"/><stop offset="1" stop-color="#7fbdf0"/></linearGradient>
<linearGradient id="yel" x1="0" y1="0" x2="1" y2="0"><stop offset="0" stop-color="#f7dc8a"/><stop offset="1" stop-color="#d9a93f"/></linearGradient>
</defs>
<g transform="translate(-0.3 0)"><!-- copy -->
<path d="M7.500 6 L12 5 L13.500 5.500 L13.500 19 L9 20 L7.500 19 Z" fill="url(#yel)" stroke="#c89c3a" stroke-width="0.800"/>
<path d="M12.500 7.500 L18 7.500 L21.500 11 L21.500 20.500 L12.500 20.500 Z" fill="#fdfdfd" stroke="#9aa3ad" stroke-width="1"/>
<path d="M14 11.500 H19 M14 13.500 H20 M14 15.500 H20 M14 17.500 H18" stroke="#8a939d" stroke-width="0.800"/>
<!-- rotate right -->
<path d="M36.500 13.500 L46.500 13.500 L46.500 20.500 L36.500 20.500 Z" fill="#fbfbfb" stroke="#b5b9c0"/>
<path d="M30.500 6.500 L36.500 6.500 L39.500 5.500 L39.500 14.500 L30.500 14.500 Z" fill="url(#blu)" stroke="#5d86b5"/>
<path d="M41 6.500 H44.500 V9" fill="none" stroke="#222" stroke-width="1.200"/><path d="M42.500 8.500 L46.500 8.500 L44.500 11 Z" fill="#222"/>
<!-- rotate left -->
<path d="M54.500 13.500 L64.500 13.500 L64.500 20.500 L54.500 20.500 Z" fill="#fbfbfb" stroke="#b5b9c0"/>
<path d="M61.500 5.500 L67.500 5.500 L70.500 8.500 L70.500 14.500 L61.500 14.500 Z" fill="url(#blu)" stroke="#5d86b5"/>
<path d="M60 6.500 H56.500 V9" fill="none" stroke="#222" stroke-width="1.200"/><path d="M54.500 8.500 L58.500 8.500 L56.500 11 Z" fill="#222"/>
</g><!-- sep -->
<path d="M74.500 2 V24" stroke="#a8a8a8"/>
<!-- prev/next -->
<path d="M202.500 13 L213 5.500 L213 20.500 Z" fill="url(#gold)" stroke="#b8962e" stroke-width="1"/>
<path d="M239.500 13 L229 5.500 L229 20.500 Z" fill="url(#gold)" stroke="#b8962e" stroke-width="1"/>
<!-- fit width -->
<rect x="251.500" y="5.500" width="11" height="15" fill="url(#blu)" stroke="#3f6fb0"/>
<path d="M253 13 L256.300 10 L256.300 16 Z M261 13 L257.700 10 L257.700 16 Z" fill="#2b62ad"/>
<!-- fit page -->
<rect x="274.500" y="5.500" width="13" height="15" fill="url(#blu)" stroke="#3f6fb0"/>
<path d="M276.500 13 L278.500 11 L278.500 15 Z M285.500 13 L283.500 11 L283.500 15 Z M281 8 L279 10 L283 10 Z M281 18 L279 16 L283 16 Z" fill="#2b62ad"/>
<!-- zoom out -->
<circle cx="305" cy="13" r="7.300" fill="url(#blc)" stroke="#5e93c7" stroke-width="1.200"/>
<path d="M301 13 H309" stroke="#1b5fae" stroke-width="2"/>
<!-- zoom in -->
<circle cx="329" cy="13" r="7.300" fill="url(#blc)" stroke="#5e93c7" stroke-width="1.200"/>
<path d="M325 13 H333 M329 9 V17" stroke="#1b5fae" stroke-width="2"/>
<path d="M341.500 2 V24" stroke="#a8a8a8"/>
</svg>
<span class="tl" style="left:84px">Page:</span>
<div class="inp" style="left:122px;width:38px"><span>3</span></div>
<span class="tl" style="left:166px;letter-spacing:0.5px">/ 13</span>
<span class="tl" style="left:351px">Find:</span>
<div class="inp" style="left:384px;width:159px"></div>
<svg width="70" height="26" viewBox="0 0 70 26" style="position:absolute;left:548px;top:0">
<path d="M2 7.500 H8 L10.700 10 V19.700 H2 Z" fill="#a0a0a0"/><path d="M8.500 12.800 L16.600 5 V20.600 Z" fill="#a0a0a0"/>
<path d="M32.600 7.500 H39 L41.800 10 V19.700 H32.600 Z" fill="#a0a0a0"/><path d="M35 12.800 L27.200 5 V20.600 Z" fill="#a0a0a0"/>
<text x="50.800" y="20" font-family="'DejaVu Sans Light','DejaVu Sans','Liberation Sans',sans-serif" font-weight="200" font-size="13.500" fill="#6f5fd6">A</text>
<text x="58.800" y="13" font-family="Liberation Sans, sans-serif" font-size="9.500" font-weight="bold" fill="#c4268c">a</text>
</svg>
</div></div>

<div id="doc">
<svg id="sch" width="1243" height="673" viewBox="262 161 1243 673" style="position:absolute;left:0;top:0">
<rect x="407.8" y="163" width="950.4" height="671" fill="#fff"/>
<rect x="425.5" y="177.5" width="893" height="628.5" fill="none" stroke="#9a9a9a" stroke-width="1"/>
<rect x="522.5" y="210.5" width="489" height="569.5" fill="none" stroke="#8a8a8a" stroke-width="1" stroke-dasharray="1.5 2"/>
<text transform="translate(547 234.2) scale(0.72 1)" font-size="19.5" fill="#8a8a8a" font-family="'DejaVu Sans Light','DejaVu Sans','Liberation Sans',sans-serif" font-weight="200" textLength="89.6" lengthAdjust="spacing">POWER</text>
<path d="M709.5 330 V327 Q709.5 323.5 713 323.5 H838 Q841.5 323.5 841.5 327 V625 Q841.5 628.5 838 628.5 H713 Q709.5 628.5 709.5 625 V622" fill="none" stroke="#4a4a4a" stroke-width="0.7" />
<path d="M709.5 329.5 H763.5 Q766.9 329.5 766.9 333 V619 Q766.9 622.4 763.5 622.4 H709.5 Z" fill="none" stroke="#4a4a4a" stroke-width="0.7" />
<path d="M841.5 329.5 H787.6 Q784.2 329.5 784.2 333 V619 Q784.2 622.4 787.6 622.4 H841.5" fill="none" stroke="#4a4a4a" stroke-width="0.7" />
<path d="M709.5 366 H766.9" fill="none" stroke="#4a4a4a" stroke-width="0.7" />
<path d="M709.5 409.6 H766.9" fill="none" stroke="#4a4a4a" stroke-width="0.7" />
<path d="M709.5 438.5 H766.9" fill="none" stroke="#4a4a4a" stroke-width="0.7" />
<path d="M784.2 352.5 H841.5" fill="none" stroke="#222" stroke-width="1.1" />
<path d="M784.2 524.5 H841.5" fill="none" stroke="#333" stroke-width="0.9" />
<path d="M784.2 562.7 H841.5" fill="none" stroke="#333" stroke-width="0.9" />
<path d="M784.2 582.4 H841.5" fill="none" stroke="#333" stroke-width="0.9" />
<path d="M709.5 412.8 H721 Q726.5 412.8 726.5 418.5 Q726.5 424.3 721 424.3 H709.5" fill="none" stroke="#4a4a4a" stroke-width="0.6" />
<path d="M841.5 487.4 H823 Q818.3 487.4 818.3 492 V517.5 Q818.3 522.2 823 522.2 H841.5" fill="none" stroke="#888" stroke-width="0.6" />
<text transform="translate(764.4 349) rotate(-90)" font-size="6" fill="#222" text-anchor="middle" font-family="Liberation Sans, sans-serif" font-weight="bold" textLength="13.4" lengthAdjust="spacingAndGlyphs">VBAT</text>
<text transform="translate(764.4 379.2) rotate(-90)" font-size="6" fill="#222" text-anchor="middle" font-family="Liberation Sans, sans-serif" font-weight="bold" textLength="17.3" lengthAdjust="spacingAndGlyphs">DC2DC</text>
<text transform="translate(764.4 423.2) rotate(-90)" font-size="6" fill="#222" text-anchor="middle" font-family="Liberation Sans, sans-serif" font-weight="bold" textLength="20.5" lengthAdjust="spacingAndGlyphs">CHARGE</text>
<text transform="translate(764.1 503) rotate(-90)" font-size="4.6" fill="#333" text-anchor="middle" font-family="Liberation Sans, sans-serif" font-weight="normal" textLength="9.9" lengthAdjust="spacingAndGlyphs">GND</text>
<text transform="translate(779.2 473.8) rotate(-90)" font-size="9.8" fill="#222" text-anchor="middle" font-family="Liberation Sans, sans-serif" font-weight="normal" textLength="28.7" lengthAdjust="spacingAndGlyphs">POWER</text>
<text transform="translate(790.6 340.6) rotate(-90)" font-size="5.4" fill="#222" text-anchor="middle" font-family="Liberation Sans, sans-serif" font-weight="bold" textLength="6.5" lengthAdjust="spacingAndGlyphs">VB</text>
<text transform="translate(790.6 423) rotate(-90)" font-size="5.4" fill="#222" text-anchor="middle" font-family="Liberation Sans, sans-serif" font-weight="bold" textLength="31.7" lengthAdjust="spacingAndGlyphs">POWER OUT</text>
<text transform="translate(790.6 546.7) rotate(-90)" font-size="5.4" fill="#222" text-anchor="middle" font-family="Liberation Sans, sans-serif" font-weight="bold" textLength="26.6" lengthAdjust="spacingAndGlyphs">POWER IN</text>
<text transform="translate(790.2 572.8) rotate(-90)" font-size="4.9" fill="#222" text-anchor="middle" font-family="Liberation Sans, sans-serif" font-weight="bold" textLength="14.4" lengthAdjust="spacingAndGlyphs">CURR.</text>
<text transform="translate(795.6 575) rotate(-90)" font-size="4.9" fill="#222" text-anchor="middle" font-family="Liberation Sans, sans-serif" font-weight="bold" textLength="10" lengthAdjust="spacingAndGlyphs">SINK</text>
<text transform="translate(790.6 603) rotate(-90)" font-size="5.4" fill="#222" text-anchor="middle" font-family="Liberation Sans, sans-serif" font-weight="bold" textLength="6.3" lengthAdjust="spacingAndGlyphs">NC</text>
<text x="775" y="318.5" font-size="2.8" fill="#777" text-anchor="middle" font-family="Liberation Sans, sans-serif" font-weight="normal" >U1-2</text>
<text x="775.5" y="322.4" font-size="2.8" fill="#4a4a4a" text-anchor="middle" font-family="Liberation Sans, sans-serif" font-weight="normal" >SC6531E-BGA</text>
<path d="M763 322.9 H788" fill="none" stroke="#999" stroke-width="0.3" />
<text x="564.5" y="303.5" font-size="2.8" fill="#555" text-anchor="middle" font-family="Liberation Sans, sans-serif" font-weight="normal" textLength="20" lengthAdjust="spacingAndGlyphs">P1 BAT_CON_3P</text>
<text x="566.5" y="307.7" font-size="3.5" fill="#1c1c90" text-anchor="middle" font-family="Liberation Sans, sans-serif" font-weight="normal" textLength="9" lengthAdjust="spacingAndGlyphs">VBAT</text>
<path d="M562.0 308.3 H571.0" fill="none" stroke="#7a7ad0" stroke-width="0.4" />
<path d="M564.6 309 H566.8 V313 L565.7 314.3 L564.6 313 Z" fill="none" stroke="#777" stroke-width="0.5" />
<path d="M565.7 314.3 V335.3 H709.5" fill="none" stroke="#3a3a3a" stroke-width="0.6" />
<circle cx="603.3" cy="335.3" r="1.1" fill="#222"/>
<circle cx="634.6" cy="335.3" r="1.1" fill="#222"/>
<circle cx="685" cy="335.3" r="1.1" fill="#222"/>
<circle cx="692.4" cy="335.3" r="1.1" fill="#222"/>
<path d="M603.3 335.3 V363" fill="none" stroke="#3a3a3a" stroke-width="0.6" />
<path d="M603.3 344.3 L601 349 L605.6 349 Z" fill="#111"/>
<path d="M600.8 344.3 H605 L605.8 343.3" fill="none" stroke="#111" stroke-width="0.7" />
<path d="M600.8 363 H605.8 M601.6999999999999 364.4 H604.9 M602.5 365.8 H604.0999999999999" fill="none" stroke="#9a9a9a" stroke-width="0.6" />
<text x="600.8" y="356" font-size="2.8" fill="#4a4a4a" text-anchor="middle" font-family="Liberation Sans, sans-serif" font-weight="normal" transform="rotate(-90 600.8 356)">D1</text>
<path d="M634.6 335.3 V349.6 H672.3 V375.3 H709.5" fill="none" stroke="#3a3a3a" stroke-width="0.6" />
<circle cx="664.8" cy="349.6" r="1.1" fill="#222"/>
<circle cx="672.3" cy="361.2" r="1.1" fill="#222"/>
<circle cx="700.6" cy="375.3" r="1.1" fill="#222"/>
<circle cx="692.4" cy="361.2" r="1.1" fill="#222"/>
<path d="M664.8 349.6 V361.5 M664.8 363.6 V374.5" fill="none" stroke="#3a3a3a" stroke-width="0.6" />
<path d="M662 361.5 H667.6 M662 363.6 H667.6" fill="none" stroke="#555" stroke-width="0.7" />
<path d="M662.3 374.5 H667.3 M663.1999999999999 375.9 H666.4 M664.0 377.3 H665.5999999999999" fill="none" stroke="#9a9a9a" stroke-width="0.6" />
<text x="662.6" y="368.5" font-size="2.8" fill="#4a4a4a" text-anchor="middle" font-family="Liberation Sans, sans-serif" font-weight="normal" transform="rotate(-90 662.6 368.5)">C1</text>
<path d="M685 335.3 V342.8 M685 345 V355.5" fill="none" stroke="#3a3a3a" stroke-width="0.6" />
<path d="M682.2 342.8 H687.8 M682.2 345 H687.8" fill="none" stroke="#555" stroke-width="0.7" />
<path d="M682.5 355.5 H687.5 M683.4 356.9 H686.6 M684.2 358.3 H685.8" fill="none" stroke="#9a9a9a" stroke-width="0.6" />
<text x="683" y="350.5" font-size="2.8" fill="#4a4a4a" text-anchor="middle" font-family="Liberation Sans, sans-serif" font-weight="normal" transform="rotate(-90 683 350.5)">C2</text>
<path d="M692.4 335.3 V340.7 H709.5" fill="none" stroke="#3a3a3a" stroke-width="0.6" />
<path d="M709.5 355.2 H692.4 V361.2 M672.3 361.2 H709.5" fill="none" stroke="#3a3a3a" stroke-width="0.6" />
<path d="M679 366.4 H690 M692.6 366.4 H700.6 V375.3" fill="none" stroke="#777" stroke-width="0.6" />
<path d="M690 363.3 V369.5 M692.4 363.3 V369.5" fill="none" stroke="#111" stroke-width="1.1" />
<path d="M676 363.9 V368.9 M677.4 364.79999999999995 V368.0 M678.8 365.59999999999997 V367.2" fill="none" stroke="#b0b0b0" stroke-width="0.6" />
<path d="M676 366.4 H679" fill="none" stroke="#aaa" stroke-width="0.5" />
<text x="686.3" y="365.6" font-size="2.8" fill="#4a4a4a" text-anchor="middle" font-family="Liberation Sans, sans-serif" font-weight="normal" >C3</text>
<text x="682" y="374.6" font-size="2.8" fill="#4a4a4a" text-anchor="middle" font-family="Liberation Sans, sans-serif" font-weight="normal" >R1</text>
<path d="M684 375.3 q1 -1.6 2 0 q1 -1.6 2 0 q1 -1.6 2 0 q1 -1.6 2 0" fill="none" stroke="#555" stroke-width="0.5" />
<path d="M618.6 386.9 H709.5" fill="none" stroke="#555" stroke-width="0.7" />
<path d="M618.6 386.9 V378" fill="none" stroke="#3a3a3a" stroke-width="0.6" />
<path d="M618.6 374.6 L616.8000000000001 377.8 L620.4 377.8 Z" fill="#111"/>
<text x="619" y="372.6" font-size="3.5" fill="#1c1c90" text-anchor="middle" font-family="Liberation Sans, sans-serif" font-weight="normal" textLength="20" lengthAdjust="spacingAndGlyphs">VBOOST_5V</text>
<path d="M609.0 373.20000000000005 H629.0" fill="none" stroke="#7a7ad0" stroke-width="0.4" />
<text x="672.5" y="386.2" font-size="2.8" fill="#4a4a4a" text-anchor="middle" font-family="Liberation Sans, sans-serif" font-weight="normal" >L1</text>
<path d="M675 386.9 q1.5 -2.2 3 0 q1.5 -2.2 3 0 q1.5 -2.2 3 0 q1.5 -2.2 3 0" fill="none" stroke="#555" stroke-width="0.5" />
<circle cx="656.5" cy="386.9" r="1.1" fill="#222"/>
<circle cx="656.5" cy="392.5" r="1.1" fill="#222"/>
<circle cx="656.5" cy="398" r="1.1" fill="#222"/>
<path d="M656.5 386.9 V401.4 H709.5" fill="none" stroke="#3a3a3a" stroke-width="0.6" />
<path d="M626 392.5 H638.2 M640.8 392.5 H656.5 M626 398 H638.2 M640.8 398 H656.5 M626 392.5 V407.5" fill="none" stroke="#3a3a3a" stroke-width="0.6" />
<path d="M638.2 389.8 V400.8 M640.6 389.8 V400.8" fill="none" stroke="#555" stroke-width="0.7" />
<circle cx="626" cy="398" r="1.1" fill="#222"/>
<path d="M623.5 407.5 H628.5 M624.4 408.9 H627.6 M625.2 410.3 H626.8" fill="none" stroke="#9a9a9a" stroke-width="0.6" />
<text x="634" y="391.7" font-size="2.8" fill="#4a4a4a" text-anchor="middle" font-family="Liberation Sans, sans-serif" font-weight="normal" >C4</text>
<text x="634" y="397.2" font-size="2.8" fill="#4a4a4a" text-anchor="middle" font-family="Liberation Sans, sans-serif" font-weight="normal" >C5</text>
<path d="M654.5 415.8 H709.5" fill="none" stroke="#555" stroke-width="0.6" />
<path d="M654.5 415.8 L653.5 414.7 H631 V416.90000000000003 H653.5 Z" fill="none" stroke="#9a9ac8" stroke-width="0.4" />
<text x="652" y="416.90000000000003" font-size="3.0" fill="#1c1c90" text-anchor="end" font-family="Liberation Sans, sans-serif" font-weight="normal" textLength="21" lengthAdjust="spacingAndGlyphs">CHARGE_DETECT</text>
<path d="M631 417.50000000000006 H652" fill="none" stroke="#7a7ad0" stroke-width="0.4" />
<path d="M654.5 421.4 H709.5" fill="none" stroke="#555" stroke-width="0.6" />
<path d="M654.5 421.4 L653.5 420.29999999999995 H631 V422.5 H653.5 Z" fill="none" stroke="#9a9ac8" stroke-width="0.4" />
<text x="652" y="422.5" font-size="3.0" fill="#1c1c90" text-anchor="end" font-family="Liberation Sans, sans-serif" font-weight="normal" textLength="12" lengthAdjust="spacingAndGlyphs">ISENSE</text>
<path d="M640 423.1 H652" fill="none" stroke="#7a7ad0" stroke-width="0.4" />
<text x="630.5" y="422.4" font-size="2.7" fill="#4a4a4a" text-anchor="start" font-family="Liberation Sans, sans-serif" font-weight="normal" >IN</text>
<path d="M654.5 427.3 H709.5" fill="none" stroke="#555" stroke-width="0.6" />
<path d="M654.5 427.3 L653.5 426.2 H631 V428.40000000000003 H653.5 Z" fill="none" stroke="#9a9ac8" stroke-width="0.4" />
<text x="652" y="428.40000000000003" font-size="3.0" fill="#1c1c90" text-anchor="end" font-family="Liberation Sans, sans-serif" font-weight="normal" textLength="14" lengthAdjust="spacingAndGlyphs">VBATSENSE</text>
<path d="M638 429.00000000000006 H652" fill="none" stroke="#7a7ad0" stroke-width="0.4" />
<text x="630.5" y="428.3" font-size="2.7" fill="#4a4a4a" text-anchor="start" font-family="Liberation Sans, sans-serif" font-weight="normal" >IN</text>
<path d="M654.5 433.1 H709.5" fill="none" stroke="#555" stroke-width="0.6" />
<path d="M654.5 433.1 L653.5 432.0 H631 V434.20000000000005 H653.5 Z" fill="none" stroke="#9a9ac8" stroke-width="0.4" />
<text x="652" y="434.20000000000005" font-size="3.0" fill="#1c1c90" text-anchor="end" font-family="Liberation Sans, sans-serif" font-weight="normal" textLength="12" lengthAdjust="spacingAndGlyphs">VCHG_DC</text>
<path d="M640 434.80000000000007 H652" fill="none" stroke="#7a7ad0" stroke-width="0.4" />
<text x="630.5" y="434.1" font-size="2.7" fill="#4a4a4a" text-anchor="start" font-family="Liberation Sans, sans-serif" font-weight="normal" >IN</text>
<text x="708.2" y="334.8" font-size="2.8" fill="#4a4a4a" text-anchor="end" font-family="Liberation Sans, sans-serif" font-weight="normal" >F1</text>
<text x="710.6" y="336.90000000000003" font-size="2.8" fill="#444" text-anchor="start" font-family="Liberation Sans, sans-serif" font-weight="normal" >VBAT1</text>
<text x="708.2" y="340.2" font-size="2.8" fill="#4a4a4a" text-anchor="end" font-family="Liberation Sans, sans-serif" font-weight="normal" >F2</text>
<text x="710.6" y="342.3" font-size="2.8" fill="#444" text-anchor="start" font-family="Liberation Sans, sans-serif" font-weight="normal" >VBAT2</text>
<text x="708.2" y="354.7" font-size="2.8" fill="#4a4a4a" text-anchor="end" font-family="Liberation Sans, sans-serif" font-weight="normal" >G5</text>
<text x="710.6" y="356.8" font-size="2.8" fill="#444" text-anchor="start" font-family="Liberation Sans, sans-serif" font-weight="normal" >BATFN</text>
<text x="708.2" y="360.7" font-size="2.8" fill="#4a4a4a" text-anchor="end" font-family="Liberation Sans, sans-serif" font-weight="normal" >H5</text>
<text x="710.6" y="362.8" font-size="2.8" fill="#444" text-anchor="start" font-family="Liberation Sans, sans-serif" font-weight="normal" >BATFN</text>
<text x="708.2" y="374.8" font-size="2.8" fill="#4a4a4a" text-anchor="end" font-family="Liberation Sans, sans-serif" font-weight="normal" >J6</text>
<text x="710.6" y="376.90000000000003" font-size="2.8" fill="#444" text-anchor="start" font-family="Liberation Sans, sans-serif" font-weight="normal" >BATBACK</text>
<text x="708.2" y="386.4" font-size="2.8" fill="#4a4a4a" text-anchor="end" font-family="Liberation Sans, sans-serif" font-weight="normal" >K6</text>
<text x="710.6" y="388.5" font-size="2.8" fill="#444" text-anchor="start" font-family="Liberation Sans, sans-serif" font-weight="normal" >LX</text>
<text x="708.2" y="400.9" font-size="2.8" fill="#4a4a4a" text-anchor="end" font-family="Liberation Sans, sans-serif" font-weight="normal" >L7</text>
<text x="710.6" y="403.0" font-size="2.8" fill="#444" text-anchor="start" font-family="Liberation Sans, sans-serif" font-weight="normal" >FB</text>
<text x="708.2" y="415.3" font-size="2.8" fill="#4a4a4a" text-anchor="end" font-family="Liberation Sans, sans-serif" font-weight="normal" >E3</text>
<text x="710.6" y="417.40000000000003" font-size="2.8" fill="#444" text-anchor="start" font-family="Liberation Sans, sans-serif" font-weight="normal" >BATSEN</text>
<text x="708.2" y="420.9" font-size="2.8" fill="#4a4a4a" text-anchor="end" font-family="Liberation Sans, sans-serif" font-weight="normal" >E5</text>
<text x="710.6" y="423.0" font-size="2.8" fill="#444" text-anchor="start" font-family="Liberation Sans, sans-serif" font-weight="normal" >ISENSE</text>
<text x="708.2" y="426.8" font-size="2.8" fill="#4a4a4a" text-anchor="end" font-family="Liberation Sans, sans-serif" font-weight="normal" >F3</text>
<text x="710.6" y="428.90000000000003" font-size="2.8" fill="#444" text-anchor="start" font-family="Liberation Sans, sans-serif" font-weight="normal" >VCHG</text>
<text x="708.2" y="432.6" font-size="2.8" fill="#4a4a4a" text-anchor="end" font-family="Liberation Sans, sans-serif" font-weight="normal" >G3</text>
<text x="710.6" y="434.70000000000005" font-size="2.8" fill="#444" text-anchor="start" font-family="Liberation Sans, sans-serif" font-weight="normal" >VDRV</text>
<path d="M675.2 444.3 V634.5" fill="none" stroke="#3a3a3a" stroke-width="0.6" />
<path d="M675.2 444.3 H709.5" fill="none" stroke="#555" stroke-width="0.6" />
<text x="708.2" y="443.8" font-size="2.8" fill="#4a4a4a" text-anchor="end" font-family="Liberation Sans, sans-serif" font-weight="normal" >A1</text>
<text x="710.6" y="445.90000000000003" font-size="2.8" fill="#444" text-anchor="start" font-family="Liberation Sans, sans-serif" font-weight="normal" >VSS</text>
<path d="M675.2 450.1 H709.5" fill="none" stroke="#555" stroke-width="0.6" />
<circle cx="675.2" cy="450.1" r="0.9" fill="#222"/>
<text x="708.2" y="449.552" font-size="2.8" fill="#4a4a4a" text-anchor="end" font-family="Liberation Sans, sans-serif" font-weight="normal" >B8</text>
<text x="710.6" y="451.65200000000004" font-size="2.8" fill="#444" text-anchor="start" font-family="Liberation Sans, sans-serif" font-weight="normal" >VSS</text>
<path d="M675.2 455.8 H709.5" fill="none" stroke="#555" stroke-width="0.6" />
<circle cx="675.2" cy="455.8" r="0.9" fill="#222"/>
<text x="708.2" y="455.30400000000003" font-size="2.8" fill="#4a4a4a" text-anchor="end" font-family="Liberation Sans, sans-serif" font-weight="normal" >C6</text>
<text x="710.6" y="457.40400000000005" font-size="2.8" fill="#444" text-anchor="start" font-family="Liberation Sans, sans-serif" font-weight="normal" >VSS</text>
<path d="M675.2 461.6 H709.5" fill="none" stroke="#555" stroke-width="0.6" />
<circle cx="675.2" cy="461.6" r="0.9" fill="#222"/>
<text x="708.2" y="461.05600000000004" font-size="2.8" fill="#4a4a4a" text-anchor="end" font-family="Liberation Sans, sans-serif" font-weight="normal" >D4</text>
<text x="710.6" y="463.15600000000006" font-size="2.8" fill="#444" text-anchor="start" font-family="Liberation Sans, sans-serif" font-weight="normal" >VSS</text>
<path d="M675.2 467.3 H709.5" fill="none" stroke="#555" stroke-width="0.6" />
<circle cx="675.2" cy="467.3" r="0.9" fill="#222"/>
<text x="708.2" y="466.808" font-size="2.8" fill="#4a4a4a" text-anchor="end" font-family="Liberation Sans, sans-serif" font-weight="normal" >E2</text>
<text x="710.6" y="468.908" font-size="2.8" fill="#444" text-anchor="start" font-family="Liberation Sans, sans-serif" font-weight="normal" >VSS</text>
<path d="M675.2 473.1 H709.5" fill="none" stroke="#555" stroke-width="0.6" />
<circle cx="675.2" cy="473.1" r="0.9" fill="#222"/>
<text x="708.2" y="472.56" font-size="2.8" fill="#4a4a4a" text-anchor="end" font-family="Liberation Sans, sans-serif" font-weight="normal" >F9</text>
<text x="710.6" y="474.66" font-size="2.8" fill="#444" text-anchor="start" font-family="Liberation Sans, sans-serif" font-weight="normal" >VSS</text>
<path d="M675.2 478.8 H709.5" fill="none" stroke="#555" stroke-width="0.6" />
<circle cx="675.2" cy="478.8" r="0.9" fill="#222"/>
<text x="708.2" y="478.312" font-size="2.8" fill="#4a4a4a" text-anchor="end" font-family="Liberation Sans, sans-serif" font-weight="normal" >G7</text>
<text x="710.6" y="480.41200000000003" font-size="2.8" fill="#444" text-anchor="start" font-family="Liberation Sans, sans-serif" font-weight="normal" >VSS</text>
<path d="M675.2 484.6 H709.5" fill="none" stroke="#555" stroke-width="0.6" />
<circle cx="675.2" cy="484.6" r="0.9" fill="#222"/>
<text x="708.2" y="484.064" font-size="2.8" fill="#4a4a4a" text-anchor="end" font-family="Liberation Sans, sans-serif" font-weight="normal" >H5</text>
<text x="710.6" y="486.16400000000004" font-size="2.8" fill="#444" text-anchor="start" font-family="Liberation Sans, sans-serif" font-weight="normal" >VSS</text>
<path d="M675.2 490.3 H709.5" fill="none" stroke="#555" stroke-width="0.6" />
<circle cx="675.2" cy="490.3" r="0.9" fill="#222"/>
<text x="708.2" y="489.81600000000003" font-size="2.8" fill="#4a4a4a" text-anchor="end" font-family="Liberation Sans, sans-serif" font-weight="normal" >J3</text>
<text x="710.6" y="491.91600000000005" font-size="2.8" fill="#444" text-anchor="start" font-family="Liberation Sans, sans-serif" font-weight="normal" >VSS</text>
<path d="M675.2 496.1 H709.5" fill="none" stroke="#555" stroke-width="0.6" />
<circle cx="675.2" cy="496.1" r="0.9" fill="#222"/>
<text x="708.2" y="495.568" font-size="2.8" fill="#4a4a4a" text-anchor="end" font-family="Liberation Sans, sans-serif" font-weight="normal" >K1</text>
<text x="710.6" y="497.668" font-size="2.8" fill="#444" text-anchor="start" font-family="Liberation Sans, sans-serif" font-weight="normal" >VSS</text>
<path d="M675.2 501.8 H709.5" fill="none" stroke="#555" stroke-width="0.6" />
<circle cx="675.2" cy="501.8" r="0.9" fill="#222"/>
<text x="708.2" y="501.32" font-size="2.8" fill="#4a4a4a" text-anchor="end" font-family="Liberation Sans, sans-serif" font-weight="normal" >L8</text>
<text x="710.6" y="503.42" font-size="2.8" fill="#444" text-anchor="start" font-family="Liberation Sans, sans-serif" font-weight="normal" >VSS</text>
<path d="M675.2 507.6 H709.5" fill="none" stroke="#555" stroke-width="0.6" />
<circle cx="675.2" cy="507.6" r="0.9" fill="#222"/>
<text x="708.2" y="507.072" font-size="2.8" fill="#4a4a4a" text-anchor="end" font-family="Liberation Sans, sans-serif" font-weight="normal" >M6</text>
<text x="710.6" y="509.172" font-size="2.8" fill="#444" text-anchor="start" font-family="Liberation Sans, sans-serif" font-weight="normal" >VSS</text>
<path d="M675.2 513.3 H709.5" fill="none" stroke="#555" stroke-width="0.6" />
<circle cx="675.2" cy="513.3" r="0.9" fill="#222"/>
<text x="708.2" y="512.8240000000001" font-size="2.8" fill="#4a4a4a" text-anchor="end" font-family="Liberation Sans, sans-serif" font-weight="normal" >A4</text>
<text x="710.6" y="514.9240000000001" font-size="2.8" fill="#444" text-anchor="start" font-family="Liberation Sans, sans-serif" font-weight="normal" >VSS</text>
<path d="M675.2 519.1 H709.5" fill="none" stroke="#555" stroke-width="0.6" />
<circle cx="675.2" cy="519.1" r="0.9" fill="#222"/>
<text x="708.2" y="518.576" font-size="2.8" fill="#4a4a4a" text-anchor="end" font-family="Liberation Sans, sans-serif" font-weight="normal" >B2</text>
<text x="710.6" y="520.676" font-size="2.8" fill="#444" text-anchor="start" font-family="Liberation Sans, sans-serif" font-weight="normal" >VSS</text>
<path d="M675.2 524.8 H709.5" fill="none" stroke="#555" stroke-width="0.6" />
<circle cx="675.2" cy="524.8" r="0.9" fill="#222"/>
<text x="708.2" y="524.328" font-size="2.8" fill="#4a4a4a" text-anchor="end" font-family="Liberation Sans, sans-serif" font-weight="normal" >C9</text>
<text x="710.6" y="526.428" font-size="2.8" fill="#444" text-anchor="start" font-family="Liberation Sans, sans-serif" font-weight="normal" >VSS</text>
<path d="M675.2 530.6 H709.5" fill="none" stroke="#555" stroke-width="0.6" />
<circle cx="675.2" cy="530.6" r="0.9" fill="#222"/>
<text x="708.2" y="530.08" font-size="2.8" fill="#4a4a4a" text-anchor="end" font-family="Liberation Sans, sans-serif" font-weight="normal" >D7</text>
<text x="710.6" y="532.1800000000001" font-size="2.8" fill="#444" text-anchor="start" font-family="Liberation Sans, sans-serif" font-weight="normal" >VSS</text>
<path d="M675.2 536.3 H709.5" fill="none" stroke="#555" stroke-width="0.6" />
<circle cx="675.2" cy="536.3" r="0.9" fill="#222"/>
<text x="708.2" y="535.832" font-size="2.8" fill="#4a4a4a" text-anchor="end" font-family="Liberation Sans, sans-serif" font-weight="normal" >E5</text>
<text x="710.6" y="537.932" font-size="2.8" fill="#444" text-anchor="start" font-family="Liberation Sans, sans-serif" font-weight="normal" >VSS</text>
<path d="M675.2 542.1 H709.5" fill="none" stroke="#555" stroke-width="0.6" />
<circle cx="675.2" cy="542.1" r="0.9" fill="#222"/>
<text x="708.2" y="541.5840000000001" font-size="2.8" fill="#4a4a4a" text-anchor="end" font-family="Liberation Sans, sans-serif" font-weight="normal" >F3</text>
<text x="710.6" y="543.6840000000001" font-size="2.8" fill="#444" text-anchor="start" font-family="Liberation Sans, sans-serif" font-weight="normal" >VSS_RF</text>
<path d="M675.2 547.8 H709.5" fill="none" stroke="#555" stroke-width="0.6" />
<circle cx="675.2" cy="547.8" r="0.9" fill="#222"/>
<text x="708.2" y="547.336" font-size="2.8" fill="#4a4a4a" text-anchor="end" font-family="Liberation Sans, sans-serif" font-weight="normal" >G1</text>
<text x="710.6" y="549.436" font-size="2.8" fill="#444" text-anchor="start" font-family="Liberation Sans, sans-serif" font-weight="normal" >VSS_RF</text>
<path d="M675.2 553.6 H709.5" fill="none" stroke="#555" stroke-width="0.6" />
<circle cx="675.2" cy="553.6" r="0.9" fill="#222"/>
<text x="708.2" y="553.088" font-size="2.8" fill="#4a4a4a" text-anchor="end" font-family="Liberation Sans, sans-serif" font-weight="normal" >H8</text>
<text x="710.6" y="555.188" font-size="2.8" fill="#444" text-anchor="start" font-family="Liberation Sans, sans-serif" font-weight="normal" >VSS_RF</text>
<path d="M675.2 559.3 H709.5" fill="none" stroke="#555" stroke-width="0.6" />
<circle cx="675.2" cy="559.3" r="0.9" fill="#222"/>
<text x="708.2" y="558.84" font-size="2.8" fill="#4a4a4a" text-anchor="end" font-family="Liberation Sans, sans-serif" font-weight="normal" >J6</text>
<text x="710.6" y="560.94" font-size="2.8" fill="#444" text-anchor="start" font-family="Liberation Sans, sans-serif" font-weight="normal" >VSS_RF</text>
<path d="M675.2 565.1 H709.5" fill="none" stroke="#555" stroke-width="0.6" />
<circle cx="675.2" cy="565.1" r="0.9" fill="#222"/>
<text x="708.2" y="564.592" font-size="2.8" fill="#4a4a4a" text-anchor="end" font-family="Liberation Sans, sans-serif" font-weight="normal" >K4</text>
<text x="710.6" y="566.692" font-size="2.8" fill="#444" text-anchor="start" font-family="Liberation Sans, sans-serif" font-weight="normal" >VSS_RF</text>
<path d="M675.2 570.8 H709.5" fill="none" stroke="#555" stroke-width="0.6" />
<circle cx="675.2" cy="570.8" r="0.9" fill="#222"/>
<text x="708.2" y="570.344" font-size="2.8" fill="#4a4a4a" text-anchor="end" font-family="Liberation Sans, sans-serif" font-weight="normal" >L2</text>
<text x="710.6" y="572.4440000000001" font-size="2.8" fill="#444" text-anchor="start" font-family="Liberation Sans, sans-serif" font-weight="normal" >VSS_RF</text>
<path d="M675.2 576.6 H709.5" fill="none" stroke="#555" stroke-width="0.6" />
<circle cx="675.2" cy="576.6" r="0.9" fill="#222"/>
<text x="708.2" y="576.096" font-size="2.8" fill="#4a4a4a" text-anchor="end" font-family="Liberation Sans, sans-serif" font-weight="normal" >M9</text>
<text x="710.6" y="578.196" font-size="2.8" fill="#444" text-anchor="start" font-family="Liberation Sans, sans-serif" font-weight="normal" >VSS_RF</text>
<path d="M675.2 587.7 H709.5" fill="none" stroke="#555" stroke-width="0.6" />
<circle cx="675.2" cy="587.7" r="0.9" fill="#222"/>
<text x="708.2" y="587.2" font-size="2.8" fill="#4a4a4a" text-anchor="end" font-family="Liberation Sans, sans-serif" font-weight="normal" >A7</text>
<text x="710.6" y="589.3000000000001" font-size="2.8" fill="#444" text-anchor="start" font-family="Liberation Sans, sans-serif" font-weight="normal" >VSSPA</text>
<path d="M675.2 593.7 H709.5" fill="none" stroke="#555" stroke-width="0.6" />
<circle cx="675.2" cy="593.7" r="0.9" fill="#222"/>
<text x="708.2" y="593.2" font-size="2.8" fill="#4a4a4a" text-anchor="end" font-family="Liberation Sans, sans-serif" font-weight="normal" >B5</text>
<text x="710.6" y="595.3000000000001" font-size="2.8" fill="#444" text-anchor="start" font-family="Liberation Sans, sans-serif" font-weight="normal" >VSSPA</text>
<path d="M675.2 605.0 H709.5" fill="none" stroke="#555" stroke-width="0.6" />
<circle cx="675.2" cy="605" r="0.9" fill="#222"/>
<text x="708.2" y="604.5" font-size="2.8" fill="#4a4a4a" text-anchor="end" font-family="Liberation Sans, sans-serif" font-weight="normal" >C3</text>
<text x="710.6" y="606.6" font-size="2.8" fill="#444" text-anchor="start" font-family="Liberation Sans, sans-serif" font-weight="normal" >VSSDCDC</text>
<path d="M675.2 616.7 H709.5" fill="none" stroke="#555" stroke-width="0.6" />
<circle cx="675.2" cy="616.7" r="0.9" fill="#222"/>
<text x="708.2" y="616.2" font-size="2.8" fill="#4a4a4a" text-anchor="end" font-family="Liberation Sans, sans-serif" font-weight="normal" >D1</text>
<text x="710.6" y="618.3000000000001" font-size="2.8" fill="#444" text-anchor="start" font-family="Liberation Sans, sans-serif" font-weight="normal" >VSSA</text>
<path d="M672.7 634.5 H677.7 M673.6 635.9 H676.8000000000001 M674.4000000000001 637.3 H676.0" fill="none" stroke="#9a9a9a" stroke-width="0.6" />
<text x="842.6" y="334.5" font-size="2.8" fill="#555" text-anchor="start" font-family="Liberation Sans, sans-serif" font-weight="normal" >A7</text>
<text x="840" y="336.5" font-size="2.7" fill="#555" text-anchor="end" font-family="Liberation Sans, sans-serif" font-weight="normal" >VDDCAM</text>
<text x="842.6" y="345.7" font-size="2.8" fill="#555" text-anchor="start" font-family="Liberation Sans, sans-serif" font-weight="normal" >A8</text>
<text x="840" y="347.7" font-size="2.7" fill="#555" text-anchor="end" font-family="Liberation Sans, sans-serif" font-weight="normal" >VDDIO</text>
<text x="842.6" y="360.6" font-size="2.8" fill="#555" text-anchor="start" font-family="Liberation Sans, sans-serif" font-weight="normal" >L9</text>
<text x="840" y="362.6" font-size="2.7" fill="#555" text-anchor="end" font-family="Liberation Sans, sans-serif" font-weight="normal" >VRFCXO</text>
<text x="842.6" y="375.0" font-size="2.8" fill="#555" text-anchor="start" font-family="Liberation Sans, sans-serif" font-weight="normal" >K9</text>
<text x="840" y="377.0" font-size="2.7" fill="#555" text-anchor="end" font-family="Liberation Sans, sans-serif" font-weight="normal" >VDD18</text>
<text x="842.6" y="386.5" font-size="2.8" fill="#555" text-anchor="start" font-family="Liberation Sans, sans-serif" font-weight="normal" >K7</text>
<text x="840" y="388.5" font-size="2.7" fill="#555" text-anchor="end" font-family="Liberation Sans, sans-serif" font-weight="normal" >VDD28</text>
<text x="842.6" y="401.0" font-size="2.8" fill="#555" text-anchor="start" font-family="Liberation Sans, sans-serif" font-weight="normal" >J8</text>
<text x="840" y="403.0" font-size="2.7" fill="#555" text-anchor="end" font-family="Liberation Sans, sans-serif" font-weight="normal" >VDDSIM0</text>
<text x="842.6" y="412.2" font-size="2.8" fill="#555" text-anchor="start" font-family="Liberation Sans, sans-serif" font-weight="normal" >J3</text>
<text x="840" y="414.2" font-size="2.7" fill="#555" text-anchor="end" font-family="Liberation Sans, sans-serif" font-weight="normal" >VDDSIM1</text>
<text x="842.6" y="423.8" font-size="2.8" fill="#555" text-anchor="start" font-family="Liberation Sans, sans-serif" font-weight="normal" >H8</text>
<text x="840" y="425.8" font-size="2.7" fill="#555" text-anchor="end" font-family="Liberation Sans, sans-serif" font-weight="normal" >VDDSIM2</text>
<text x="842.6" y="437.9" font-size="2.8" fill="#555" text-anchor="start" font-family="Liberation Sans, sans-serif" font-weight="normal" >G4</text>
<text x="840" y="439.9" font-size="2.7" fill="#555" text-anchor="end" font-family="Liberation Sans, sans-serif" font-weight="normal" >VDDSD</text>
<text x="842.6" y="452.8" font-size="2.8" fill="#555" text-anchor="start" font-family="Liberation Sans, sans-serif" font-weight="normal" >J1</text>
<text x="840" y="454.8" font-size="2.7" fill="#555" text-anchor="end" font-family="Liberation Sans, sans-serif" font-weight="normal" >VDDCAMA</text>
<text x="842.6" y="464.0" font-size="2.8" fill="#555" text-anchor="start" font-family="Liberation Sans, sans-serif" font-weight="normal" >H6</text>
<text x="840" y="466.0" font-size="2.7" fill="#555" text-anchor="end" font-family="Liberation Sans, sans-serif" font-weight="normal" >VDDCAMD</text>
<text x="842.6" y="478.3" font-size="2.8" fill="#555" text-anchor="start" font-family="Liberation Sans, sans-serif" font-weight="normal" >G8</text>
<text x="840" y="480.3" font-size="2.7" fill="#555" text-anchor="end" font-family="Liberation Sans, sans-serif" font-weight="normal" >VDDKPLED</text>
<text x="842.6" y="492.9" font-size="2.8" fill="#555" text-anchor="start" font-family="Liberation Sans, sans-serif" font-weight="normal" >F4</text>
<text x="840" y="494.9" font-size="2.7" fill="#555" text-anchor="end" font-family="Liberation Sans, sans-serif" font-weight="normal" >AVDDRF</text>
<text x="842.6" y="504.0" font-size="2.8" fill="#555" text-anchor="start" font-family="Liberation Sans, sans-serif" font-weight="normal" >J2</text>
<text x="840" y="506.0" font-size="2.7" fill="#555" text-anchor="end" font-family="Liberation Sans, sans-serif" font-weight="normal" >AVDD_BG</text>
<text x="842.6" y="515.8" font-size="2.8" fill="#555" text-anchor="start" font-family="Liberation Sans, sans-serif" font-weight="normal" >F5</text>
<text x="840" y="517.8" font-size="2.7" fill="#555" text-anchor="end" font-family="Liberation Sans, sans-serif" font-weight="normal" >VDD_DCXO</text>
<text x="842.6" y="532.5" font-size="2.8" fill="#555" text-anchor="start" font-family="Liberation Sans, sans-serif" font-weight="normal" >E9</text>
<text x="840" y="534.5" font-size="2.7" fill="#555" text-anchor="end" font-family="Liberation Sans, sans-serif" font-weight="normal" >VDD_3</text>
<text x="842.6" y="552.5" font-size="2.8" fill="#555" text-anchor="start" font-family="Liberation Sans, sans-serif" font-weight="normal" >D8</text>
<text x="840" y="554.5" font-size="2.7" fill="#555" text-anchor="end" font-family="Liberation Sans, sans-serif" font-weight="normal" >VDDIO</text>
<text x="842.6" y="567.4" font-size="2.8" fill="#555" text-anchor="start" font-family="Liberation Sans, sans-serif" font-weight="normal" >F8</text>
<text x="840" y="569.4" font-size="2.7" fill="#555" text-anchor="end" font-family="Liberation Sans, sans-serif" font-weight="normal" >BK_LED</text>
<text x="842.6" y="576.1" font-size="2.8" fill="#555" text-anchor="start" font-family="Liberation Sans, sans-serif" font-weight="normal" >D6</text>
<text x="840" y="578.1" font-size="2.7" fill="#555" text-anchor="end" font-family="Liberation Sans, sans-serif" font-weight="normal" >VIBR</text>
<text x="842.6" y="587.1" font-size="2.8" fill="#555" text-anchor="start" font-family="Liberation Sans, sans-serif" font-weight="normal" >A1</text>
<text x="840" y="588.9" font-size="2.7" fill="#555" text-anchor="end" font-family="Liberation Sans, sans-serif" font-weight="normal" >NC</text>
<text x="842.6" y="592.7" font-size="2.8" fill="#555" text-anchor="start" font-family="Liberation Sans, sans-serif" font-weight="normal" >A2</text>
<text x="840" y="594.5" font-size="2.7" fill="#555" text-anchor="end" font-family="Liberation Sans, sans-serif" font-weight="normal" >NC</text>
<text x="842.6" y="598.4000000000001" font-size="2.8" fill="#555" text-anchor="start" font-family="Liberation Sans, sans-serif" font-weight="normal" >A10</text>
<text x="840" y="600.2" font-size="2.7" fill="#555" text-anchor="end" font-family="Liberation Sans, sans-serif" font-weight="normal" >NC</text>
<text x="842.6" y="604.1" font-size="2.8" fill="#555" text-anchor="start" font-family="Liberation Sans, sans-serif" font-weight="normal" >B10</text>
<text x="840" y="605.9" font-size="2.7" fill="#555" text-anchor="end" font-family="Liberation Sans, sans-serif" font-weight="normal" >NC</text>
<text x="842.6" y="610.1" font-size="2.8" fill="#555" text-anchor="start" font-family="Liberation Sans, sans-serif" font-weight="normal" >B3</text>
<text x="840" y="611.9" font-size="2.7" fill="#555" text-anchor="end" font-family="Liberation Sans, sans-serif" font-weight="normal" >NC</text>
<text x="842.6" y="615.7" font-size="2.8" fill="#555" text-anchor="start" font-family="Liberation Sans, sans-serif" font-weight="normal" >B1</text>
<text x="840" y="617.5" font-size="2.7" fill="#555" text-anchor="end" font-family="Liberation Sans, sans-serif" font-weight="normal" >NC</text>
<path d="M841.5 335 H857.8 M860.1 335 H877.4" fill="none" stroke="#555" stroke-width="0.6" />
<path d="M857.5 332 V338 M860.5 332 V338" fill="none" stroke="#111" stroke-width="1.0" />
<path d="M877.4 332.5 V337.5 M878.8 333.4 V336.6 M880.1999999999999 334.2 V335.8" fill="none" stroke="#b0b0b0" stroke-width="0.6" />
<text x="856.5999999999999" y="334.4" font-size="2.8" fill="#4a4a4a" text-anchor="end" font-family="Liberation Sans, sans-serif" font-weight="normal" >C10</text>
<path d="M841.5 346.2 H857.8 M860.1 346.2 H877.4" fill="none" stroke="#888" stroke-width="0.6" />
<path d="M857.8 343.4 V349.0 M860.1 343.4 V349.0" fill="none" stroke="#777" stroke-width="0.6" />
<path d="M877.4 343.7 V348.7 M878.8 344.59999999999997 V347.8 M880.1999999999999 345.4 V347.0" fill="none" stroke="#b0b0b0" stroke-width="0.6" />
<text x="856.5999999999999" y="345.59999999999997" font-size="2.8" fill="#4a4a4a" text-anchor="end" font-family="Liberation Sans, sans-serif" font-weight="normal" >C11</text>
<path d="M841.5 361.1 H910.5 V349.5" fill="none" stroke="#555" stroke-width="0.7" />
<path d="M910.5 345.5 L908.7 348.7 L912.3 348.7 Z" fill="#111"/>
<text x="910.7" y="344.2" font-size="3.5" fill="#1c1c90" text-anchor="middle" font-family="Liberation Sans, sans-serif" font-weight="normal" textLength="14.5" lengthAdjust="spacingAndGlyphs">VRFCXO</text>
<path d="M903.45 344.8 H917.95" fill="none" stroke="#7a7ad0" stroke-width="0.4" />
<circle cx="846.6" cy="375.5" r="1.1" fill="#222"/>
<path d="M841.5 375.5 H883 V373.5" fill="none" stroke="#555" stroke-width="0.7" />
<path d="M883 369.7 L881.2 372.9 L884.8 372.9 Z" fill="#111"/>
<text x="883.5" y="368.4" font-size="3.5" fill="#1c1c90" text-anchor="middle" font-family="Liberation Sans, sans-serif" font-weight="normal" textLength="15" lengthAdjust="spacingAndGlyphs">VDD_1V8</text>
<path d="M876.0 369.0 H891.0" fill="none" stroke="#7a7ad0" stroke-width="0.4" />
<path d="M846.6 375.5 V380.1 H850" fill="none" stroke="#555" stroke-width="0.6" />
<path d="M850 380.1 H856 M858.6 380.1 H870.9" fill="none" stroke="#888" stroke-width="0.6" />
<path d="M856 377.3 V382.90000000000003 M858.6 377.3 V382.90000000000003" fill="none" stroke="#777" stroke-width="0.6" />
<path d="M870.9 377.6 V382.6 M872.3 378.5 V381.70000000000005 M873.6999999999999 379.3 V380.90000000000003" fill="none" stroke="#b0b0b0" stroke-width="0.6" />
<text x="854.8" y="379.5" font-size="2.8" fill="#4a4a4a" text-anchor="end" font-family="Liberation Sans, sans-serif" font-weight="normal" >C12</text>
<circle cx="846.6" cy="387" r="1.1" fill="#222"/>
<path d="M841.5 387 H893.2 V376.5" fill="none" stroke="#555" stroke-width="0.7" />
<path d="M893.2 372.7 L891.4000000000001 375.9 L895.0 375.9 Z" fill="#111"/>
<text x="894.5" y="372.6" font-size="3.5" fill="#1c1c90" text-anchor="middle" font-family="Liberation Sans, sans-serif" font-weight="normal" textLength="15" lengthAdjust="spacingAndGlyphs">VDD_2V8</text>
<path d="M887.0 373.20000000000005 H902.0" fill="none" stroke="#7a7ad0" stroke-width="0.4" />
<path d="M846.6 387 V391.3 H850" fill="none" stroke="#555" stroke-width="0.6" />
<path d="M850 391.3 H856 M858.6 391.3 H870.9" fill="none" stroke="#888" stroke-width="0.6" />
<path d="M856 388.5 V394.1 M858.6 388.5 V394.1" fill="none" stroke="#777" stroke-width="0.6" />
<path d="M870.9 388.8 V393.8 M872.3 389.7 V392.90000000000003 M873.6999999999999 390.5 V392.1" fill="none" stroke="#b0b0b0" stroke-width="0.6" />
<text x="854.8" y="390.7" font-size="2.8" fill="#4a4a4a" text-anchor="end" font-family="Liberation Sans, sans-serif" font-weight="normal" >C13</text>
<path d="M841.5 401.5 H965" fill="none" stroke="#555" stroke-width="0.7" />
<circle cx="965" cy="401.5" r="1.0" fill="#222"/>
<path d="M965 401.5 V393.3" fill="none" stroke="#555" stroke-width="0.7" />
<path d="M965 389.4 L963.2 392.59999999999997 L966.8 392.59999999999997 Z" fill="#111"/>
<text x="965.5" y="388.2" font-size="3.5" fill="#1c1c90" text-anchor="middle" font-family="Liberation Sans, sans-serif" font-weight="normal" textLength="9" lengthAdjust="spacingAndGlyphs">VSIM0</text>
<path d="M961.0 388.8 H970.0" fill="none" stroke="#7a7ad0" stroke-width="0.4" />
<path d="M965 401.5 V411.8 M965 414.0 V426.5" fill="none" stroke="#999" stroke-width="0.6" />
<path d="M962.2 411.8 H967.8 M962.2 414.0 H967.8" fill="none" stroke="#777" stroke-width="0.6" />
<path d="M962.5 426.5 H967.5 M963.4 427.9 H966.6 M964.2 429.3 H965.8" fill="none" stroke="#9a9a9a" stroke-width="0.6" />
<text x="963.4" y="421.65" font-size="2.8" fill="#555" text-anchor="middle" font-family="Liberation Sans, sans-serif" font-weight="normal" transform="rotate(-90 963.4 421.65)">C25</text>
<path d="M841.5 412.7 H950.4" fill="none" stroke="#555" stroke-width="0.7" />
<circle cx="950.4" cy="412.7" r="1.0" fill="#222"/>
<path d="M950.4 412.7 V406.3" fill="none" stroke="#555" stroke-width="0.7" />
<path d="M950.4 402.4 L948.6 405.59999999999997 L952.1999999999999 405.59999999999997 Z" fill="#111"/>
<text x="950.6" y="401.5" font-size="3.5" fill="#1c1c90" text-anchor="middle" font-family="Liberation Sans, sans-serif" font-weight="normal" textLength="9" lengthAdjust="spacingAndGlyphs">VSIM1</text>
<path d="M946.1 402.1 H955.1" fill="none" stroke="#7a7ad0" stroke-width="0.4" />
<path d="M950.4 412.7 V422 M950.4 424.2 V437.5" fill="none" stroke="#999" stroke-width="0.6" />
<path d="M947.6 422 H953.1999999999999 M947.6 424.2 H953.1999999999999" fill="none" stroke="#777" stroke-width="0.6" />
<path d="M947.9 437.5 H952.9 M948.8 438.9 H952.0 M949.6 440.3 H951.1999999999999" fill="none" stroke="#9a9a9a" stroke-width="0.6" />
<text x="948.8" y="432.25" font-size="2.8" fill="#555" text-anchor="middle" font-family="Liberation Sans, sans-serif" font-weight="normal" transform="rotate(-90 948.8 432.25)">C20</text>
<path d="M841.5 424.3 H937.4" fill="none" stroke="#555" stroke-width="0.7" />
<circle cx="937.4" cy="424.3" r="1.0" fill="#222"/>
<path d="M937.4 424.3 V418.4" fill="none" stroke="#555" stroke-width="0.7" />
<path d="M937.4 414.5 L935.6 417.7 L939.1999999999999 417.7 Z" fill="#111"/>
<text x="937.3" y="413" font-size="3.5" fill="#1c1c90" text-anchor="middle" font-family="Liberation Sans, sans-serif" font-weight="normal" textLength="9.5" lengthAdjust="spacingAndGlyphs">VSIM2</text>
<path d="M932.55 413.6 H942.05" fill="none" stroke="#7a7ad0" stroke-width="0.4" />
<path d="M937.4 424.3 V432.3 M937.4 434.5 V448.5" fill="none" stroke="#999" stroke-width="0.6" />
<path d="M934.6 432.3 H940.1999999999999 M934.6 434.5 H940.1999999999999" fill="none" stroke="#777" stroke-width="0.6" />
<path d="M934.9 448.5 H939.9 M935.8 449.9 H939.0 M936.6 451.3 H938.1999999999999" fill="none" stroke="#9a9a9a" stroke-width="0.6" />
<text x="935.8" y="442.9" font-size="2.8" fill="#555" text-anchor="middle" font-family="Liberation Sans, sans-serif" font-weight="normal" transform="rotate(-90 935.8 442.9)">C27</text>
<path d="M841.5 438.4 H924.9" fill="none" stroke="#555" stroke-width="0.7" />
<circle cx="924.9" cy="438.4" r="1.0" fill="#222"/>
<path d="M924.9 438.4 V433.7" fill="none" stroke="#555" stroke-width="0.7" />
<path d="M924.9 429.8 L923.1 433.0 L926.6999999999999 433.0 Z" fill="#111"/>
<text x="925" y="428.6" font-size="3.5" fill="#1c1c90" text-anchor="middle" font-family="Liberation Sans, sans-serif" font-weight="normal" textLength="9.5" lengthAdjust="spacingAndGlyphs">VDDSD</text>
<path d="M920.25 429.20000000000005 H929.75" fill="none" stroke="#7a7ad0" stroke-width="0.4" />
<path d="M924.9 438.4 V445.8 M924.9 448.0 V464.5" fill="none" stroke="#999" stroke-width="0.6" />
<path d="M922.1 445.8 H927.6999999999999 M922.1 448.0 H927.6999999999999" fill="none" stroke="#777" stroke-width="0.6" />
<path d="M922.4 464.5 H927.4 M923.3 465.9 H926.5 M924.1 467.3 H925.6999999999999" fill="none" stroke="#9a9a9a" stroke-width="0.6" />
<text x="923.3" y="457.65" font-size="2.8" fill="#555" text-anchor="middle" font-family="Liberation Sans, sans-serif" font-weight="normal" transform="rotate(-90 923.3 457.65)">C24</text>
<path d="M841.5 453.3 H911.9" fill="none" stroke="#555" stroke-width="0.7" />
<circle cx="911.9" cy="453.3" r="1.0" fill="#222"/>
<path d="M911.9 453.3 V447.3" fill="none" stroke="#555" stroke-width="0.7" />
<path d="M911.9 443.4 L910.1 446.59999999999997 L913.6999999999999 446.59999999999997 Z" fill="#111"/>
<text x="912.5" y="441.9" font-size="3.5" fill="#1c1c90" text-anchor="middle" font-family="Liberation Sans, sans-serif" font-weight="normal" textLength="25" lengthAdjust="spacingAndGlyphs">VCAMA_AVDD_2V8</text>
<path d="M900.0 442.5 H925.0" fill="none" stroke="#7a7ad0" stroke-width="0.4" />
<path d="M911.9 453.3 V460.7 M911.9 462.9 V474.5" fill="none" stroke="#999" stroke-width="0.6" />
<path d="M909.1 460.7 H914.6999999999999 M909.1 462.9 H914.6999999999999" fill="none" stroke="#777" stroke-width="0.6" />
<path d="M909.4 474.5 H914.4 M910.3 475.9 H913.5 M911.1 477.3 H912.6999999999999" fill="none" stroke="#9a9a9a" stroke-width="0.6" />
<text x="910.3" y="470.1" font-size="2.8" fill="#555" text-anchor="middle" font-family="Liberation Sans, sans-serif" font-weight="normal" transform="rotate(-90 910.3 470.1)">C21</text>
<path d="M841.5 464.5 H898.8 V462.8" fill="none" stroke="#555" stroke-width="0.7" />
<path d="M898.8 458.8 L897.0 462.0 L900.5999999999999 462.0 Z" fill="#111"/>
<text x="899" y="457.5" font-size="3.5" fill="#1c1c90" text-anchor="middle" font-family="Liberation Sans, sans-serif" font-weight="normal" textLength="24.5" lengthAdjust="spacingAndGlyphs">VCAMD_DVDD_1V8</text>
<path d="M886.75 458.1 H911.25" fill="none" stroke="#7a7ad0" stroke-width="0.4" />
<circle cx="846.6" cy="493.4" r="1.1" fill="#222"/>
<path d="M841.5 493.4 H890.4 V492" fill="none" stroke="#555" stroke-width="0.7" />
<path d="M890.4 488.1 L888.6 491.3 L892.1999999999999 491.3 Z" fill="#111"/>
<text x="890.2" y="486.4" font-size="3.5" fill="#1c1c90" text-anchor="middle" font-family="Liberation Sans, sans-serif" font-weight="normal" textLength="14" lengthAdjust="spacingAndGlyphs">VRF_2V8</text>
<path d="M883.2 487.0 H897.2" fill="none" stroke="#7a7ad0" stroke-width="0.4" />
<path d="M846.6 493.4 V497.4 H850" fill="none" stroke="#555" stroke-width="0.6" />
<path d="M850 497.4 H857.8 M860.2 497.4 H870.9" fill="none" stroke="#888" stroke-width="0.6" />
<path d="M857.8 494.59999999999997 V500.2 M860.2 494.59999999999997 V500.2" fill="none" stroke="#777" stroke-width="0.6" />
<path d="M870.9 494.9 V499.9 M872.3 495.79999999999995 V499.0 M873.6999999999999 496.59999999999997 V498.2" fill="none" stroke="#b0b0b0" stroke-width="0.6" />
<text x="856.5999999999999" y="496.79999999999995" font-size="2.8" fill="#4a4a4a" text-anchor="end" font-family="Liberation Sans, sans-serif" font-weight="normal" >C30</text>
<path d="M841.5 504.5 H856 M858.3 504.5 H870.9" fill="none" stroke="#555" stroke-width="0.6" />
<path d="M855.7 501.5 V507.5 M858.6999999999999 501.5 V507.5" fill="none" stroke="#111" stroke-width="1.0" />
<path d="M870.9 502.0 V507.0 M872.3 502.9 V506.1 M873.6999999999999 503.7 V505.3" fill="none" stroke="#b0b0b0" stroke-width="0.6" />
<text x="854.8" y="503.9" font-size="2.8" fill="#4a4a4a" text-anchor="end" font-family="Liberation Sans, sans-serif" font-weight="normal" >C31</text>
<path d="M841.5 516.3 H856 M858.3 516.3 H870.9" fill="none" stroke="#555" stroke-width="0.6" />
<path d="M855.7 513.3 V519.3 M858.6999999999999 513.3 V519.3" fill="none" stroke="#111" stroke-width="1.0" />
<path d="M870.9 513.8 V518.8 M872.3 514.6999999999999 V517.9 M873.6999999999999 515.5 V517.0999999999999" fill="none" stroke="#b0b0b0" stroke-width="0.6" />
<text x="854.8" y="515.6999999999999" font-size="2.8" fill="#4a4a4a" text-anchor="end" font-family="Liberation Sans, sans-serif" font-weight="normal" >C32</text>
<circle cx="846.6" cy="533" r="1.1" fill="#222"/>
<path d="M841.5 533 H856 M858.3 533 H870.9" fill="none" stroke="#555" stroke-width="0.6" />
<path d="M855.7 530 V536 M858.6999999999999 530 V536" fill="none" stroke="#111" stroke-width="1.0" />
<path d="M870.9 530.5 V535.5 M872.3 531.4 V534.6 M873.6999999999999 532.2 V533.8" fill="none" stroke="#b0b0b0" stroke-width="0.6" />
<text x="854.8" y="532.4" font-size="2.8" fill="#4a4a4a" text-anchor="end" font-family="Liberation Sans, sans-serif" font-weight="normal" >C33</text>
<path d="M846.6 533 V539.4 H890.4 V526" fill="none" stroke="#555" stroke-width="0.7" />
<path d="M890.4 522.1 L888.6 525.3000000000001 L892.1999999999999 525.3000000000001 Z" fill="#111"/>
<text x="890.2" y="521" font-size="3.5" fill="#1c1c90" text-anchor="middle" font-family="Liberation Sans, sans-serif" font-weight="normal" textLength="19.5" lengthAdjust="spacingAndGlyphs">VCHARGE_5V</text>
<path d="M880.45 521.6 H899.95" fill="none" stroke="#7a7ad0" stroke-width="0.4" />
<circle cx="846.6" cy="553" r="1.1" fill="#222"/>
<path d="M841.5 553 H890.4 V549.5" fill="none" stroke="#555" stroke-width="0.7" />
<path d="M890.4 545.4 L888.6 548.6 L892.1999999999999 548.6 Z" fill="#111"/>
<text x="890.2" y="543.8" font-size="3.5" fill="#1c1c90" text-anchor="middle" font-family="Liberation Sans, sans-serif" font-weight="normal" textLength="16" lengthAdjust="spacingAndGlyphs">VBAT_3V8</text>
<path d="M882.2 544.4 H898.2" fill="none" stroke="#7a7ad0" stroke-width="0.4" />
<path d="M846.6 553 V559 H850" fill="none" stroke="#555" stroke-width="0.6" />
<path d="M850 559 H857 M859.4 559 H870.9" fill="none" stroke="#888" stroke-width="0.6" />
<path d="M857 556.2 V561.8 M859.4 556.2 V561.8" fill="none" stroke="#777" stroke-width="0.6" />
<path d="M870.9 556.5 V561.5 M872.3 557.4 V560.6 M873.6999999999999 558.2 V559.8" fill="none" stroke="#b0b0b0" stroke-width="0.6" />
<text x="855.8" y="558.4" font-size="2.8" fill="#4a4a4a" text-anchor="end" font-family="Liberation Sans, sans-serif" font-weight="normal" >C34</text>
<path d="M841.5 567.9 H875.5" fill="none" stroke="#777" stroke-width="0.6" />
<path d="M875.5 567.9 L876.8 566.6 H880.3 V569.1999999999999 H876.8 Z" fill="none" stroke="#9a9ac8" stroke-width="0.4" />
<text x="881" y="569.1" font-size="3.2" fill="#1c1c90" text-anchor="start" font-family="Liberation Sans, sans-serif" font-weight="normal" textLength="18.5" lengthAdjust="spacingAndGlyphs">BACKLIGHT</text>
<path d="M881 569.7 H899.5" fill="none" stroke="#7a7ad0" stroke-width="0.4" />
<text x="901.7" y="568.9" font-size="2.7" fill="#555" text-anchor="start" font-family="Liberation Sans, sans-serif" font-weight="normal" >OUT</text>
<path d="M841.5 576.6 H875.5" fill="none" stroke="#777" stroke-width="0.6" />
<path d="M875.5 576.6 L876.8 575.3000000000001 H880.3 V577.9 H876.8 Z" fill="none" stroke="#9a9ac8" stroke-width="0.4" />
<text x="881" y="577.8000000000001" font-size="3.2" fill="#1c1c90" text-anchor="start" font-family="Liberation Sans, sans-serif" font-weight="normal" textLength="14.5" lengthAdjust="spacingAndGlyphs">VIBRATOR</text>
<path d="M881 578.4000000000001 H895.5" fill="none" stroke="#7a7ad0" stroke-width="0.4" />
<text x="897.7" y="577.6" font-size="2.7" fill="#555" text-anchor="start" font-family="Liberation Sans, sans-serif" font-weight="normal" >OUT</text>
<path d="M1174.5 734.5 H1318.5 M1174.5 734.5 V806 M1174.5 748.2 H1318.5 M1102.2 763.2 H1318.5 M1102.2 777.6 H1318.5 M1174.5 799.1 H1318.5 M1102.2 763.2 V806 M1145.5 763.2 V806 M1102.2 791.3 H1174.5 M1266.3 799.1 V806" fill="none" stroke="#6a6a6a" stroke-width="0.8" />
<text x="1177" y="739.6" font-size="2.6" fill="#4a4a4a" text-anchor="start" font-family="'Liberation Mono',monospace" font-weight="normal" >TITLE &amp; REV.</text>
<text x="1177" y="754.2" font-size="2.6" fill="#4a4a4a" text-anchor="start" font-family="'Liberation Mono',monospace" font-weight="normal" >DOCUMENT NO.</text>
<text x="1177" y="768.4" font-size="2.6" fill="#4a4a4a" text-anchor="start" font-family="'Liberation Mono',monospace" font-weight="normal" >DEPARTMENT</text>
<text x="1177" y="782.8" font-size="2.6" fill="#4a4a4a" text-anchor="start" font-family="'Liberation Mono',monospace" font-weight="normal" >COMPANY</text>
<text x="1105" y="768.4" font-size="2.6" fill="#4a4a4a" text-anchor="start" font-family="'Liberation Mono',monospace" font-weight="normal" >DESIGNER</text>
<text x="1148" y="768.4" font-size="2.6" fill="#4a4a4a" text-anchor="start" font-family="'Liberation Mono',monospace" font-weight="normal" >DATED</text>
<text x="1105" y="783" font-size="2.6" fill="#4a4a4a" text-anchor="start" font-family="'Liberation Mono',monospace" font-weight="normal" >CHK.</text>
<text x="1148" y="780" font-size="2.6" fill="#4a4a4a" text-anchor="start" font-family="'Liberation Mono',monospace" font-weight="normal" >DATED</text>
<text x="1105" y="797.2" font-size="2.6" fill="#4a4a4a" text-anchor="start" font-family="'Liberation Mono',monospace" font-weight="normal" >APPROVED</text>
<text x="1148" y="797.2" font-size="2.6" fill="#4a4a4a" text-anchor="start" font-family="'Liberation Mono',monospace" font-weight="normal" >DATED</text>
<text x="1196" y="775.3" font-size="5.3" fill="#222" text-anchor="start" font-family="'Liberation Mono',monospace" font-weight="normal" textLength="60" lengthAdjust="spacingAndGlyphs">ITEL-SH Hardware RD</text>
<text x="1196" y="791" font-size="5.3" fill="#222" text-anchor="start" font-family="'Liberation Mono',monospace" font-weight="normal" textLength="58" lengthAdjust="spacingAndGlyphs">TRANSSION HOLDINGS</text>
<text x="1201.7" y="804.5" font-size="5.3" fill="#222" text-anchor="start" font-family="'Liberation Mono',monospace" font-weight="normal" textLength="34" lengthAdjust="spacingAndGlyphs">TOP SECRET</text>
</svg>
</div>
<div id="rsb"><div class="sbtn up"><svg width="11" height="7" viewBox="0 0 11 7"><path d="M1 6 L5.500 1.500 L10 6" fill="none" stroke="#505050" stroke-width="1.400"/></svg></div><div class="thumb" style="top:116px;height:49px"><b></b></div><div class="sbtn dn"><svg width="11" height="7" viewBox="0 0 11 7"><path d="M1 1 L5.500 5.500 L10 1" fill="none" stroke="#505050" stroke-width="1.400"/></svg></div></div>

<div id="status"><span class="l">Version:1.0.0.52</span><span class="r">Current [G2425_Main_SCH_V2.0]</span></div>
</div>
</body></html>
